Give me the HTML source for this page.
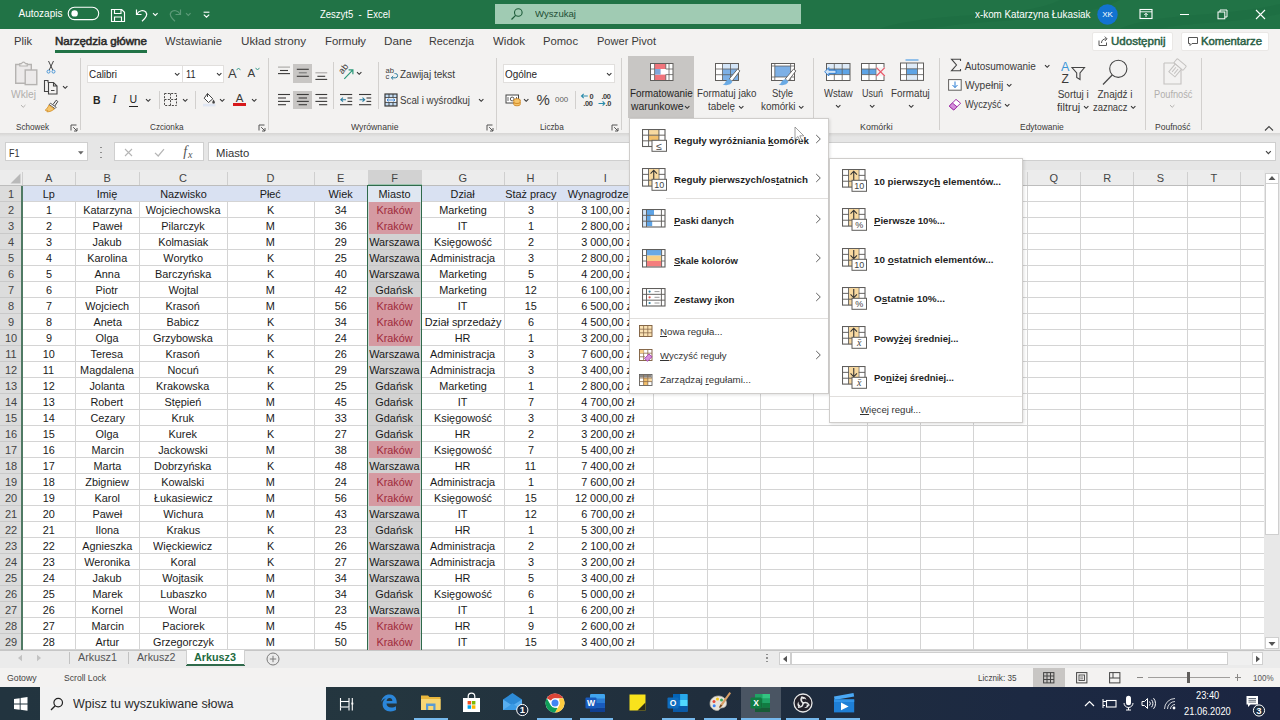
<!DOCTYPE html>
<html lang="pl"><head><meta charset="utf-8"><title>Zeszyt5 - Excel</title><style>
html,body{margin:0;padding:0}
body{width:1280px;height:720px;overflow:hidden;position:relative;background:#fff;font-family:"Liberation Sans",sans-serif;font-size:10px;color:#333}
.b{position:absolute;display:block}
.t{position:absolute;white-space:nowrap;display:block}
u{text-decoration:underline;text-underline-offset:1px}
</style></head><body>
<!-- p_title -->
<div class="b" style="left:0px;top:0px;width:1280px;height:28.5px;background:#217346"></div>
<span class="t" style="left:18.5px;top:7.3px;font-size:10px;line-height:13px;color:#fff">Autozapis</span>
<svg class="b" style="left:67px;top:6px" width="34" height="15" viewBox="0 0 34 15"><rect x="1.2" y="1.2" width="30.5" height="12.4" rx="6.2" fill="none" stroke="#fff" stroke-width="1.1"/><circle cx="7.6" cy="7.4" r="3.2" fill="#fff"/></svg>
<svg class="b" style="left:110px;top:8px" width="16" height="15" viewBox="0 0 16 15"><path d="M1.5 1.5 h10.2 l2.8 2.8 v9.2 h-13z M4.5 1.5 v4 h6.5 v-4 M4.5 13.5 v-4.5 h7 v4.5" fill="none" stroke="#fff" stroke-width="1.15"/></svg>
<svg class="b" style="left:134px;top:7px" width="16" height="16" viewBox="0 0 16 16"><path d="M2.5 2.5 v5 h5" fill="none" stroke="#fff" stroke-width="1.2"/><path d="M2.8 7.2 C5 3.5 9.5 2.5 11.8 5 C14 7.5 12 11 8 14.2" fill="none" stroke="#fff" stroke-width="1.2"/></svg>
<svg class="b" style="left:152.2px;top:11.7px" width="6.6" height="5.6" viewBox="0 0 6.6 5.6"><path d="M1 1.15 l2.3 2.3 l2.3 -2.3" fill="none" stroke="#fff" stroke-width="1.1"/></svg>
<svg class="b" style="left:167px;top:7px" width="16" height="16" viewBox="0 0 16 16"><path d="M13.5 2.5 v5 h-5" fill="none" stroke="#5c9a78" stroke-width="1.2"/><path d="M13.2 7.2 C11 3.5 6.5 2.5 4.2 5 C2 7.5 4 11 8 14.2" fill="none" stroke="#5c9a78" stroke-width="1.2"/></svg>
<svg class="b" style="left:184.7px;top:11.7px" width="6.6" height="5.6" viewBox="0 0 6.6 5.6"><path d="M1 1.15 l2.3 2.3 l2.3 -2.3" fill="none" stroke="#5c9a78" stroke-width="1.1"/></svg>
<svg class="b" style="left:202px;top:10px" width="9" height="9" viewBox="0 0 9 9"><path d="M1.6 2.2 h5.8" stroke="#fff" stroke-width="1.1"/><path d="M1.8 4.6 l2.7 2.6 l2.7 -2.6" fill="none" stroke="#fff" stroke-width="1.1"/></svg>
<span class="t" style="left:320px;top:6.6px;font-size:10.5px;line-height:14px;transform:scaleX(0.902);transform-origin:0 50%;color:#fff">Zeszyt5  -  Excel</span>
<div class="b" style="left:495px;top:4px;width:305.5px;height:20px;background:#a0cbb3"></div>
<svg class="b" style="left:510px;top:7px" width="14" height="14" viewBox="0 0 14 14"><circle cx="8.3" cy="5.5" r="3.8" fill="none" stroke="#1e5c3a" stroke-width="1.1"/><path d="M5.6 8.3 L1.5 12.5" stroke="#1e5c3a" stroke-width="1.2"/></svg>
<span class="t" style="left:535px;top:8px;font-size:9.5px;line-height:12px;transform:scaleX(1.011);transform-origin:0 50%;color:#1f4f35">Wyszukaj</span>
<svg class="b" style="left:820px;top:0px" width="460" height="28.5" viewBox="0 0 460 28.5"><path d="M60 28.5 C120 10 200 20 240 0 L300 0 C260 22 170 18 110 28.5z" fill="#1e6b41" opacity=".55"/><path d="M300 28.5 C340 12 400 18 460 4 L460 14 C410 24 370 22 340 28.5z" fill="#1e6b41" opacity=".55"/></svg>
<span class="t" style="left:975px;top:7.5px;font-size:10px;line-height:13px;transform:scaleX(0.985);transform-origin:0 50%;color:#fff">x-kom Katarzyna Łukasiak</span>
<svg class="b" style="left:1097px;top:3.5px" width="21" height="21" viewBox="0 0 21 21"><circle cx="10.5" cy="10.5" r="10.2" fill="#1273d1"/></svg>
<span class="t" style="left:1102.16px;top:9.6px;font-size:8px;line-height:10px;color:#fff">XK</span>
<svg class="b" style="left:1139px;top:8px" width="14" height="12" viewBox="0 0 14 12"><rect x="1" y="1.5" width="12" height="9" fill="none" stroke="#fff" stroke-width="1.1"/><path d="M1 3.8 h12" stroke="#fff" stroke-width=".9"/><path d="M7 9 v-3.6 M5.3 7 l1.7 -1.7 l1.7 1.7" fill="none" stroke="#fff" stroke-width="1"/></svg>
<div class="b" style="left:1180px;top:14px;width:9px;height:1.1px;background:#fff"></div>
<svg class="b" style="left:1217px;top:9px" width="11" height="11" viewBox="0 0 11 11"><rect x="1" y="3" width="6.8" height="6.8" fill="none" stroke="#fff" stroke-width="1"/><path d="M3 3 v-2 h7 v7 h-2" fill="none" stroke="#fff" stroke-width="1"/></svg>
<svg class="b" style="left:1255px;top:9px" width="11" height="11" viewBox="0 0 11 11"><path d="M1 1 L10 10 M10 1 L1 10" stroke="#fff" stroke-width="1.1"/></svg>
<!-- p_tabs -->
<div class="b" style="left:0px;top:28.5px;width:1280px;height:104.7px;background:#f3f2f1"></div>
<span class="t" style="left:14px;top:34.3px;font-size:10.5px;line-height:14px;transform:scaleX(1.064);transform-origin:0 50%;color:#3b3a39">Plik</span>
<span class="t" style="left:165px;top:34.3px;font-size:10.5px;line-height:14px;transform:scaleX(1.062);transform-origin:0 50%;color:#3b3a39">Wstawianie</span>
<span class="t" style="left:241px;top:34.3px;font-size:10.5px;line-height:14px;transform:scaleX(1.114);transform-origin:0 50%;color:#3b3a39">Układ strony</span>
<span class="t" style="left:325px;top:34.3px;font-size:10.5px;line-height:14px;transform:scaleX(1.081);transform-origin:0 50%;color:#3b3a39">Formuły</span>
<span class="t" style="left:384px;top:34.3px;font-size:10.5px;line-height:14px;transform:scaleX(1.115);transform-origin:0 50%;color:#3b3a39">Dane</span>
<span class="t" style="left:429px;top:34.3px;font-size:10.5px;line-height:14px;transform:scaleX(1.028);transform-origin:0 50%;color:#3b3a39">Recenzja</span>
<span class="t" style="left:493px;top:34.3px;font-size:10.5px;line-height:14px;transform:scaleX(1.097);transform-origin:0 50%;color:#3b3a39">Widok</span>
<span class="t" style="left:543px;top:34.3px;font-size:10.5px;line-height:14px;transform:scaleX(1.071);transform-origin:0 50%;color:#3b3a39">Pomoc</span>
<span class="t" style="left:597px;top:34.3px;font-size:10.5px;line-height:14px;transform:scaleX(1.053);transform-origin:0 50%;color:#3b3a39">Power Pivot</span>
<span class="t" style="left:55px;top:34.3px;font-size:10.5px;line-height:14px;transform:scaleX(1.102);transform-origin:0 50%;color:#2b2a29;-webkit-text-stroke:.5px #2b2a29">Narzędzia główne</span>
<div class="b" style="left:55px;top:50px;width:92px;height:2.6px;background:#217346"></div>
<div class="b" style="left:1091.5px;top:32px;width:81.5px;height:18.5px;background:#fff;border:1px solid #eae8e6;box-sizing:border-box;border-radius:2px"></div>
<svg class="b" style="left:1097px;top:35px" width="12" height="12" viewBox="0 0 12 12"><path d="M2 5.5 v5 h7.5 v-3" fill="none" stroke="#555" stroke-width="1"/><path d="M4.5 8 C4.5 5 6.5 3.8 9.5 3.8 M7.8 1.6 l2.2 2.2 l-2.2 2.2" fill="none" stroke="#555" stroke-width="1"/></svg>
<span class="t" style="left:1111.3px;top:34.3px;font-size:10.5px;line-height:14px;transform:scaleX(1.098);transform-origin:0 50%;color:#2a5f45;-webkit-text-stroke:.45px #2a5f45">Udostępnij</span>
<div class="b" style="left:1181px;top:32px;width:88px;height:18.5px;background:#fff;border:1px solid #eae8e6;box-sizing:border-box;border-radius:2px"></div>
<svg class="b" style="left:1186.5px;top:36px" width="12" height="11" viewBox="0 0 12 11"><path d="M1.5 1.5 h9 v6 h-5.5 l-2 2 v-2 h-1.5z" fill="none" stroke="#555" stroke-width="1"/></svg>
<span class="t" style="left:1200.8px;top:34.3px;font-size:10.5px;line-height:14px;transform:scaleX(1.078);transform-origin:0 50%;color:#2a5f45;-webkit-text-stroke:.45px #2a5f45">Komentarze</span>
<!-- p_ribbon1 -->
<svg class="b" style="left:14px;top:58.5px" width="25" height="28" viewBox="0 0 25 28"><path d="M1.7 5.5 H17.3 V24.3 H1.7z" fill="#eceaea" stroke="#b5b3b1" stroke-width="1.4"/><path d="M5.8 7 V4.6 H7.6 a2 2 0 0 1 3.8 0 H13.2 V7z" fill="#f3f2f1" stroke="#b5b3b1" stroke-width="1.2"/><rect x="11.2" y="11" width="11.6" height="14.6" fill="#eceaea" stroke="#b5b3b1" stroke-width="1.4"/></svg>
<span class="t" style="left:11px;top:87.9px;font-size:10px;line-height:13px;transform:scaleX(1.023);transform-origin:0 50%;color:#b1afad">Wklej</span>
<svg class="b" style="left:19.8px;top:103.8px" width="6.4" height="5.4" viewBox="0 0 6.4 5.4"><path d="M1 1.1 l2.2 2.2 l2.2 -2.2" fill="none" stroke="#b1afad" stroke-width="1"/></svg>
<svg class="b" style="left:45px;top:60px" width="12" height="15" viewBox="0 0 12 15"><path d="M3.5 1 L7.8 10 M8.5 1 L4.2 10" stroke="#444" stroke-width="1"/><circle cx="3.5" cy="11.6" r="1.5" fill="none" stroke="#4a96d6" stroke-width="1"/><circle cx="8.5" cy="11.6" r="1.5" fill="none" stroke="#4a96d6" stroke-width="1"/></svg>
<svg class="b" style="left:43px;top:79px" width="16" height="16" viewBox="0 0 16 16"><path d="M5 3.5 v-2 h-3.5 v11 h3.5" fill="none" stroke="#444" stroke-width="1.1"/><path d="M5.5 3.5 h5 l3.5 3.5 v8 h-8.5z M10.5 3.5 v3.5 h3.5" fill="#f3f2f1" stroke="#444" stroke-width="1.1"/><path d="M8 11.5 h3.5" stroke="#444" stroke-width="1"/></svg>
<svg class="b" style="left:62.3px;top:84.8px" width="6.4" height="5.4" viewBox="0 0 6.4 5.4"><path d="M1 1.1 l2.2 2.2 l2.2 -2.2" fill="none" stroke="#333" stroke-width="1.1"/></svg>
<svg class="b" style="left:43.5px;top:99px" width="15" height="14" viewBox="0 0 15 14"><path d="M9 5.5 L12.2 1.2 L13.8 2.5 L10.8 7" fill="none" stroke="#444" stroke-width="1"/><path d="M6.5 4.2 L12.2 8.3 L10.9 9.6 L5.2 5.5z" fill="#fff" stroke="#444" stroke-width=".9"/><path d="M5 6 L10.3 10 C8.5 11.5 6 13 2.8 12.8 L3.8 11.4 L1.2 11.2 C2.8 10 4 8.2 5 6z" fill="#f6c56b" stroke="#d08a1e" stroke-width=".8"/></svg>
<span class="t" style="left:16px;top:121px;font-size:9.5px;line-height:12px;transform:scaleX(0.856);transform-origin:0 50%;color:#3b3a39">Schowek</span>
<svg class="b" style="left:69.5px;top:123.5px" width="8" height="8" viewBox="0 0 8 8"><path d="M1 6.5 v-5.5 h5.5" fill="none" stroke="#555" stroke-width="1"/><path d="M3.2 3.2 L7 7 M7 4 v3 h-3" fill="none" stroke="#555" stroke-width="1"/></svg>
<div class="b" style="left:79.5px;top:58px;width:1px;height:72px;background:#d2d0ce"></div>
<div class="b" style="left:87px;top:64.5px;width:96px;height:18.5px;background:#fff;border:1px solid #e1dfdd;box-sizing:border-box"></div>
<div class="b" style="left:183px;top:64.5px;width:40.5px;height:18.5px;background:#fff;border:1px solid #e1dfdd;border-left:none;box-sizing:border-box"></div>
<span class="t" style="left:89px;top:67.5px;font-size:10px;line-height:13px;transform:scaleX(0.988);transform-origin:0 50%;color:#252423">Calibri</span>
<svg class="b" style="left:174.3px;top:71.8px" width="6.4" height="5.4" viewBox="0 0 6.4 5.4"><path d="M1 1.1 l2.2 2.2 l2.2 -2.2" fill="none" stroke="#333" stroke-width="1.1"/></svg>
<span class="t" style="left:185.5px;top:67.5px;font-size:10px;line-height:13px;transform:scaleX(0.915);transform-origin:0 50%;color:#252423">11</span>
<svg class="b" style="left:215.8px;top:71.8px" width="6.4" height="5.4" viewBox="0 0 6.4 5.4"><path d="M1 1.1 l2.2 2.2 l2.2 -2.2" fill="none" stroke="#333" stroke-width="1.1"/></svg>
<span class="t" style="left:228px;top:64.5px;font-size:13px;line-height:17px;color:#3b3a39">A</span>
<svg class="b" style="left:236px;top:66.5px" width="5" height="4" viewBox="0 0 5 4"><path d="M.5 3.2 L2.5 1 L4.5 3.2" fill="none" stroke="#3c9c8c" stroke-width="1"/></svg>
<span class="t" style="left:247.5px;top:66px;font-size:11.5px;line-height:15px;color:#3b3a39">A</span>
<svg class="b" style="left:254.5px;top:66.5px" width="5" height="4" viewBox="0 0 5 4"><path d="M.5 .8 L2.5 3 L4.5 .8" fill="none" stroke="#3c9c8c" stroke-width="1"/></svg>
<span class="t" style="left:93px;top:92.6px;font-size:10.5px;line-height:14px;font-weight:bold;color:#252423">B</span>
<span class="t" style="left:112.5px;top:91.4px;font-size:12px;line-height:16px;font-style:italic;font-family:'Liberation Serif',serif;color:#252423">I</span>
<span class="t" style="left:129.5px;top:92.3px;font-size:10.5px;line-height:14px;color:#252423">U</span>
<div class="b" style="left:129px;top:105.5px;width:8.5px;height:1px;background:#252423"></div>
<svg class="b" style="left:144.8px;top:97.8px" width="6.4" height="5.4" viewBox="0 0 6.4 5.4"><path d="M1 1.1 l2.2 2.2 l2.2 -2.2" fill="none" stroke="#333" stroke-width="1.1"/></svg>
<div class="b" style="left:159px;top:91px;width:1px;height:18px;background:#d2d0ce"></div>
<svg class="b" style="left:163px;top:93px" width="15" height="14" viewBox="0 0 15 14"><rect x="1.5" y=".5" width="12" height="12" fill="none" stroke="#4a4846" stroke-width="1" stroke-dasharray="2 1.33"/><path d="M7.5 .5 v12 M1.5 6.5 h12" stroke="#4a4846" stroke-width="1" stroke-dasharray="2 1.33"/></svg>
<svg class="b" style="left:182.3px;top:97.8px" width="6.4" height="5.4" viewBox="0 0 6.4 5.4"><path d="M1 1.1 l2.2 2.2 l2.2 -2.2" fill="none" stroke="#333" stroke-width="1.1"/></svg>
<div class="b" style="left:195px;top:91px;width:1px;height:18px;background:#d2d0ce"></div>
<svg class="b" style="left:201.5px;top:92px" width="14" height="15" viewBox="0 0 14 15"><path d="M5.5 1.5 L10.8 6.8 L6.5 10.5 L2.2 6.2z" fill="#fff" stroke="#444" stroke-width="1"/><path d="M5.5 1.5 v3.5" stroke="#444" stroke-width="1"/><path d="M11.5 7.5 c.9 1.4 1.4 2.2 1.4 2.9 a1.3 1.3 0 0 1 -2.6 0 c0 -.7 .5 -1.5 1.2 -2.9z" fill="#444"/><rect x="1" y="11.8" width="12.5" height="2.6" fill="#dfe6f3"/></svg>
<svg class="b" style="left:219.3px;top:97.8px" width="6.4" height="5.4" viewBox="0 0 6.4 5.4"><path d="M1 1.1 l2.2 2.2 l2.2 -2.2" fill="none" stroke="#333" stroke-width="1.1"/></svg>
<span class="t" style="left:235.66px;top:90.5px;font-size:11.5px;line-height:15px;color:#3b3a39">A</span>
<div class="b" style="left:233px;top:102.7px;width:13.2px;height:3.3px;background:#d7191c"></div>
<svg class="b" style="left:251px;top:97.8px" width="6.4" height="5.4" viewBox="0 0 6.4 5.4"><path d="M1 1.1 l2.2 2.2 l2.2 -2.2" fill="none" stroke="#333" stroke-width="1.1"/></svg>
<span class="t" style="left:149.5px;top:121px;font-size:9.5px;line-height:12px;transform:scaleX(0.857);transform-origin:0 50%;color:#3b3a39">Czcionka</span>
<svg class="b" style="left:258px;top:123.5px" width="8" height="8" viewBox="0 0 8 8"><path d="M1 6.5 v-5.5 h5.5" fill="none" stroke="#555" stroke-width="1"/><path d="M3.2 3.2 L7 7 M7 4 v3 h-3" fill="none" stroke="#555" stroke-width="1"/></svg>
<div class="b" style="left:267.5px;top:58px;width:1px;height:72px;background:#d2d0ce"></div>
<div class="b" style="left:293px;top:64px;width:19px;height:18.7px;background:#c8c6c4"></div>
<div class="b" style="left:293px;top:90.7px;width:19px;height:18.7px;background:#c8c6c4"></div>
<svg class="b" style="left:277px;top:65px" width="15" height="12" viewBox="0 0 15 12"><path d="M1 2.1 H13" stroke="#a8a6a4" stroke-width="1.1"/><path d="M3 5.5 H11" stroke="#3b3a39" stroke-width="1.1"/><path d="M1 8.6 H13" stroke="#3b3a39" stroke-width="1.1"/></svg>
<svg class="b" style="left:296px;top:67px" width="15" height="12" viewBox="0 0 15 12"><path d="M0.8 2.3 H12.8" stroke="#3b3a39" stroke-width="1.1"/><path d="M2.8 5.8 H10.8" stroke="#777" stroke-width="1.1"/><path d="M0.8 9.3 H12.8" stroke="#3b3a39" stroke-width="1.1"/></svg>
<svg class="b" style="left:314px;top:70px" width="15" height="12" viewBox="0 0 15 12"><path d="M1.4 2.8 H13.2" stroke="#a8a6a4" stroke-width="1.1"/><path d="M3.4 6.3 H11.2" stroke="#3b3a39" stroke-width="1.1"/><path d="M1.4 9.4 H13.2" stroke="#3b3a39" stroke-width="1.1"/></svg>
<svg class="b" style="left:277px;top:92px" width="15" height="15" viewBox="0 0 15 15"><path d="M1 2.5 H13" stroke="#3b3a39" stroke-width="1.1"/><path d="M1 6 H9" stroke="#3b3a39" stroke-width="1.1"/><path d="M1 9.4 H13" stroke="#3b3a39" stroke-width="1.1"/><path d="M1 12.7 H9" stroke="#3b3a39" stroke-width="1.1"/></svg>
<svg class="b" style="left:296px;top:92px" width="15" height="15" viewBox="0 0 15 15"><path d="M0.8 2.5 H12.8" stroke="#3b3a39" stroke-width="1.1"/><path d="M2.6 6 H11" stroke="#3b3a39" stroke-width="1.1"/><path d="M0.8 9.4 H12.8" stroke="#3b3a39" stroke-width="1.1"/><path d="M2.6 12.7 H11" stroke="#3b3a39" stroke-width="1.1"/></svg>
<svg class="b" style="left:314px;top:92px" width="15" height="15" viewBox="0 0 15 15"><path d="M1.4 2.5 H13.2" stroke="#3b3a39" stroke-width="1.1"/><path d="M5 6 H13.2" stroke="#3b3a39" stroke-width="1.1"/><path d="M1.4 9.4 H13.2" stroke="#3b3a39" stroke-width="1.1"/><path d="M5 12.7 H13.2" stroke="#3b3a39" stroke-width="1.1"/></svg>
<div class="b" style="left:333px;top:62px;width:1px;height:47px;background:#d2d0ce"></div>
<svg class="b" style="left:338px;top:63px" width="17" height="18" viewBox="0 0 17 18"><text x="0" y="0" font-size="9" font-family="Liberation Sans, sans-serif" fill="#3b3a39" transform="translate(4.6 11.5) rotate(-52)">ab</text><path d="M6.3 15.8 L14.6 7.2 M10.6 6.9 h4.3 v4.3" fill="none" stroke="#2e9a7b" stroke-width="1.2"/></svg>
<svg class="b" style="left:355.6px;top:71.3px" width="6.4" height="5.4" viewBox="0 0 6.4 5.4"><path d="M1 1.1 l2.2 2.2 l2.2 -2.2" fill="none" stroke="#333" stroke-width="1.1"/></svg>
<svg class="b" style="left:339.8px;top:92px" width="13" height="15" viewBox="0 0 13 15"><path d="M0 2.5 H12.2" stroke="#3b3a39" stroke-width="1.1"/><path d="M7.5 6 H12.2" stroke="#3b3a39" stroke-width="1.1"/><path d="M7.5 9.4 H12.2" stroke="#3b3a39" stroke-width="1.1"/><path d="M0 12.7 H12.2" stroke="#3b3a39" stroke-width="1.1"/><path d="M6 7.7 h-5.2 M3 5.7 l-2.2 2 l2.2 2" fill="none" stroke="#2b7c9f" stroke-width="1.1"/></svg>
<svg class="b" style="left:358.7px;top:92px" width="13" height="15" viewBox="0 0 13 15"><path d="M0 2.5 H12.2" stroke="#3b3a39" stroke-width="1.1"/><path d="M7.5 6 H12.2" stroke="#3b3a39" stroke-width="1.1"/><path d="M7.5 9.4 H12.2" stroke="#3b3a39" stroke-width="1.1"/><path d="M0 12.7 H12.2" stroke="#3b3a39" stroke-width="1.1"/><path d="M0.5 7.7 h5.2 M3.5 5.7 l2.2 2 l-2.2 2" fill="none" stroke="#2b7c9f" stroke-width="1.1"/></svg>
<div class="b" style="left:378px;top:62px;width:1px;height:47px;background:#d2d0ce"></div>
<svg class="b" style="left:385px;top:65px" width="14" height="15" viewBox="0 0 14 15"><text x=".6" y="7.6" font-size="7.6" font-family="Liberation Sans, sans-serif" fill="#3b3a39">ab</text><text x=".6" y="13.6" font-size="7.6" font-family="Liberation Sans, sans-serif" fill="#3b3a39">c</text><path d="M9.5 8.6 h1 a2.1 2.1 0 0 1 0 4.2 h-4 M8.2 11 l-1.9 1.8 l1.9 1.8" fill="none" stroke="#2b7c9f" stroke-width="1"/></svg>
<span class="t" style="left:400px;top:68.2px;font-size:10px;line-height:13px;color:#3b3a39">Zawijaj tekst</span>
<svg class="b" style="left:383.5px;top:92.5px" width="14" height="14" viewBox="0 0 14 14"><rect x="1" y="1" width="12" height="12" fill="#c3dcf3"/><rect x="1" y="4.6" width="12" height="4.8" fill="#fff"/><path d="M5 1 v3.6 M9 1 v3.6 M5 9.4 v3.6 M9 9.4 v3.6 M1 4.6 h12 M1 9.4 h12" stroke="#3b3a39" stroke-width=".9"/><rect x="1" y="1" width="12" height="12" fill="none" stroke="#3b3a39" stroke-width="1.2"/><path d="M3 7 h8 M4.6 5.6 l-1.6 1.4 l1.6 1.4 M9.4 5.6 l1.6 1.4 l-1.6 1.4" fill="none" stroke="#2b7cd3" stroke-width=".9"/></svg>
<span class="t" style="left:400px;top:94.1px;font-size:10px;line-height:13px;transform:scaleX(0.976);transform-origin:0 50%;color:#3b3a39">Scal i wyśrodkuj</span>
<svg class="b" style="left:477.8px;top:98.3px" width="6.4" height="5.4" viewBox="0 0 6.4 5.4"><path d="M1 1.1 l2.2 2.2 l2.2 -2.2" fill="none" stroke="#333" stroke-width="1.1"/></svg>
<span class="t" style="left:350.5px;top:121px;font-size:9.5px;line-height:12px;transform:scaleX(0.910);transform-origin:0 50%;color:#3b3a39">Wyrównanie</span>
<svg class="b" style="left:485.5px;top:123.5px" width="8" height="8" viewBox="0 0 8 8"><path d="M1 6.5 v-5.5 h5.5" fill="none" stroke="#555" stroke-width="1"/><path d="M3.2 3.2 L7 7 M7 4 v3 h-3" fill="none" stroke="#555" stroke-width="1"/></svg>
<div class="b" style="left:495.5px;top:58px;width:1px;height:72px;background:#d2d0ce"></div>
<div class="b" style="left:503px;top:64px;width:112px;height:19px;background:#fff;border:1px solid #e1dfdd;box-sizing:border-box"></div>
<span class="t" style="left:505.3px;top:67.5px;font-size:10px;line-height:13px;transform:scaleX(0.992);transform-origin:0 50%;color:#252423">Ogólne</span>
<svg class="b" style="left:606.3px;top:71.8px" width="6.4" height="5.4" viewBox="0 0 6.4 5.4"><path d="M1 1.1 l2.2 2.2 l2.2 -2.2" fill="none" stroke="#333" stroke-width="1.1"/></svg>
<svg class="b" style="left:504.5px;top:93px" width="17" height="14" viewBox="0 0 17 14"><rect x="1" y="2" width="12.5" height="8" fill="#fff" stroke="#444" stroke-width="1"/><circle cx="7.2" cy="6" r="1.9" fill="none" stroke="#444" stroke-width=".9"/><path d="M3 4 v4 M11.5 4 v4" stroke="#444" stroke-width=".8"/><ellipse cx="12" cy="7" rx="3.2" ry="1.3" fill="#f6c56b" stroke="#c97d16" stroke-width=".8"/><path d="M8.8 7 v4.5 a3.2 1.3 0 0 0 6.4 0 v-4.5" fill="#f6c56b" stroke="#c97d16" stroke-width=".8"/><path d="M8.8 9.2 a3.2 1.3 0 0 0 6.4 0" fill="none" stroke="#c97d16" stroke-width=".8"/></svg>
<svg class="b" style="left:523.4px;top:97.8px" width="6.4" height="5.4" viewBox="0 0 6.4 5.4"><path d="M1 1.1 l2.2 2.2 l2.2 -2.2" fill="none" stroke="#333" stroke-width="1.1"/></svg>
<span class="t" style="left:536.5px;top:89.5px;font-size:15px;line-height:20px;color:#3b3a39">%</span>
<span class="t" style="left:555px;top:95px;font-size:8px;line-height:10px;transform:scaleX(0.989);transform-origin:0 50%;color:#605e5c">000</span>
<div class="b" style="left:574.7px;top:91px;width:1px;height:18px;background:#d2d0ce"></div>
<svg class="b" style="left:579.5px;top:92px" width="15" height="16" viewBox="0 0 15 16"><text x="9.6" y="6.6" font-size="7.4" font-weight="bold" font-family="Liberation Sans, sans-serif" fill="#3b3a39" letter-spacing="-.35">0</text><text x="3.2" y="14.2" font-size="7.4" font-weight="bold" font-family="Liberation Sans, sans-serif" fill="#3b3a39" letter-spacing="-.35">.00</text><path d="M7.8 4 h-6.3 M3.7 1.8 l-2.2 2.2 l2.2 2.2" fill="none" stroke="#2b8cab" stroke-width="1.1"/></svg>
<svg class="b" style="left:598px;top:92px" width="15" height="16" viewBox="0 0 15 16"><text x="3.4" y="6.6" font-size="7.4" font-weight="bold" font-family="Liberation Sans, sans-serif" fill="#3b3a39" letter-spacing="-.35">.00</text><text x="7.6" y="14.2" font-size="7.4" font-weight="bold" font-family="Liberation Sans, sans-serif" fill="#3b3a39" letter-spacing="-.35">.0</text><path d="M.5 11.5 h6.3 M4.6 9.3 l2.2 2.2 l-2.2 2.2" fill="none" stroke="#2b8cab" stroke-width="1.1"/></svg>
<span class="t" style="left:539.7px;top:121px;font-size:9.5px;line-height:12px;transform:scaleX(0.863);transform-origin:0 50%;color:#3b3a39">Liczba</span>
<svg class="b" style="left:611px;top:123.5px" width="8" height="8" viewBox="0 0 8 8"><path d="M1 6.5 v-5.5 h5.5" fill="none" stroke="#555" stroke-width="1"/><path d="M3.2 3.2 L7 7 M7 4 v3 h-3" fill="none" stroke="#555" stroke-width="1"/></svg>
<div class="b" style="left:620.7px;top:58px;width:1px;height:72px;background:#d2d0ce"></div>
<!-- p_ribbon2 -->
<div class="b" style="left:628px;top:55.8px;width:66.4px;height:62px;background:#c8c6c4"></div>
<svg class="b" style="left:649.6px;top:63.2px" width="24" height="18" viewBox="0 0 24 18"><rect x=".5" y=".5" width="22.5" height="17" fill="#fff"/><rect x="4.6" y="1" width="11.2" height="5" fill="#f0747c"/><rect x="4.6" y="11.6" width="11.2" height="5.6" fill="#f0747c"/><rect x="4.6" y="6" width="6" height="5.6" fill="#7fa7dc"/><rect x=".5" y=".5" width="22.5" height="17" fill="none" stroke="#605e5c" stroke-width="1"/><path d="M4.6 .5 V17.5 M19 .5 V17.5 M15.8 .5 V6 M15.8 11.6 V17.5 M.5 6 H4.6 M.5 11.6 H4.6 M15.8 6 H23 M15.8 11.6 H23" stroke="#605e5c" stroke-width=".8" fill="none"/></svg>
<span class="t" style="left:629.5px;top:87.3px;font-size:10px;line-height:13px;transform:scaleX(0.990);transform-origin:0 50%;color:#252423">Formatowanie</span>
<span class="t" style="left:631px;top:100.1px;font-size:10px;line-height:13px;transform:scaleX(1.038);transform-origin:0 50%;color:#252423">warunkowe</span>
<svg class="b" style="left:684.3px;top:104.8px" width="6.4" height="5.4" viewBox="0 0 6.4 5.4"><path d="M1 1.1 l2.2 2.2 l2.2 -2.2" fill="none" stroke="#333" stroke-width="1.1"/></svg>
<svg class="b" style="left:715px;top:63.2px" width="27" height="23" viewBox="0 0 27 23"><rect x=".5" y=".5" width="23" height="17" fill="#fff"/><rect x="7.5" y="1" width="16" height="5" fill="#d3e5f8"/><rect x="7.5" y="6" width="16" height="11.5" fill="#7db0e6"/><rect x=".5" y=".5" width="23" height="17" fill="none" stroke="#605e5c" stroke-width="1"/><path d="M7.5 .5 V17.5 M15.5 .5 V17.5 M.5 6 H23.5 M.5 11.7 H23.5" stroke="#605e5c" stroke-width=".8"/><path d="M14.2 16 l8.4 -10 l2.3 1.9 l-7.9 10.4z" fill="#fff" stroke="#605e5c" stroke-width=".9"/><path d="M14.4 16.2 c-1.8 .1 -3.6 1.2 -4.2 3.4 c-.3 1.1 -1.4 1.7 -2.6 1.9 c3.8 1.5 9.2 .4 9.6 -3.2z" fill="#6aaae4"/></svg>
<span class="t" style="left:696.5px;top:87.3px;font-size:10px;line-height:13px;transform:scaleX(0.982);transform-origin:0 50%;color:#3b3a39">Formatuj jako</span>
<span class="t" style="left:708.4px;top:100.1px;font-size:10px;line-height:13px;transform:scaleX(0.991);transform-origin:0 50%;color:#3b3a39">tabelę</span>
<svg class="b" style="left:738.3px;top:104.8px" width="6.4" height="5.4" viewBox="0 0 6.4 5.4"><path d="M1 1.1 l2.2 2.2 l2.2 -2.2" fill="none" stroke="#333" stroke-width="1.1"/></svg>
<svg class="b" style="left:771.2px;top:63.2px" width="27" height="23" viewBox="0 0 27 23"><rect x=".5" y=".5" width="23" height="17" fill="#fff"/><rect x="3.8" y="3" width="15.8" height="11" fill="#7db0e6"/><rect x=".5" y=".5" width="23" height="17" fill="none" stroke="#605e5c" stroke-width="1"/><path d="M3.8 .5 V17.5 M19.6 .5 V17.5 M.5 3 H23.5 M.5 14 H23.5" stroke="#605e5c" stroke-width=".8"/><path d="M14.2 16 l8.4 -10 l2.3 1.9 l-7.9 10.4z" fill="#fff" stroke="#605e5c" stroke-width=".9"/><path d="M14.4 16.2 c-1.8 .1 -3.6 1.2 -4.2 3.4 c-.3 1.1 -1.4 1.7 -2.6 1.9 c3.8 1.5 9.2 .4 9.6 -3.2z" fill="#6aaae4"/></svg>
<span class="t" style="left:772px;top:87.3px;font-size:10px;line-height:13px;transform:scaleX(0.945);transform-origin:0 50%;color:#3b3a39">Style</span>
<span class="t" style="left:760.8px;top:100.1px;font-size:10px;line-height:13px;transform:scaleX(0.986);transform-origin:0 50%;color:#3b3a39">komórki</span>
<svg class="b" style="left:798.3px;top:104.8px" width="6.4" height="5.4" viewBox="0 0 6.4 5.4"><path d="M1 1.1 l2.2 2.2 l2.2 -2.2" fill="none" stroke="#333" stroke-width="1.1"/></svg>
<div class="b" style="left:813.4px;top:58px;width:1px;height:72px;background:#d2d0ce"></div>
<svg class="b" style="left:824.2px;top:63px" width="27" height="18" viewBox="0 0 27 18"><rect x="2.5" y=".5" width="23.5" height="17" fill="#fff"/><rect x="2.5" y=".8" width="23.5" height="5.4" fill="#deebf8"/><rect x="2.5" y="6" width="23.5" height="5.6" fill="#5ea4e6"/><rect x="2.5" y=".5" width="23.5" height="17" fill="none" stroke="#605e5c" stroke-width="1"/><path d="M10.3 .5 V17.5 M18.2 .5 V17.5 M2.5 6 H26 M2.5 11.6 H26" stroke="#605e5c" stroke-width=".8"/><path d="M.7 8.8 L4.8 4.6 V7.2 H12 V10.4 H4.8 V13z" fill="#cfe3f7" stroke="#2b7cd3" stroke-width=".9"/></svg>
<span class="t" style="left:824px;top:87.3px;font-size:10px;line-height:13px;transform:scaleX(0.957);transform-origin:0 50%;color:#3b3a39">Wstaw</span>
<svg class="b" style="left:834.8px;top:104.3px" width="6.4" height="5.4" viewBox="0 0 6.4 5.4"><path d="M1 1.1 l2.2 2.2 l2.2 -2.2" fill="none" stroke="#333" stroke-width="1.1"/></svg>
<svg class="b" style="left:861px;top:63px" width="26" height="18" viewBox="0 0 26 18"><rect x=".5" y=".5" width="22.5" height="17" fill="#fff"/><rect x=".8" y="6" width="14.2" height="5.6" fill="#5ea4e6"/><rect x=".5" y=".5" width="22.5" height="17" fill="none" stroke="#605e5c" stroke-width="1"/><path d="M8 .5 V17.5 M15.2 .5 V17.5 M.5 6 H23 M.5 11.6 H23" stroke="#605e5c" stroke-width=".8"/><rect x="15.6" y="4.4" width="9" height="8.8" fill="#f3f2f1"/><path d="M15.4 4.6 L23.8 13 M23.8 4.6 L15.4 13" stroke="#e8586a" stroke-width="1.2"/></svg>
<span class="t" style="left:862px;top:87.3px;font-size:10px;line-height:13px;transform:scaleX(0.900);transform-origin:0 50%;color:#3b3a39">Usuń</span>
<svg class="b" style="left:869.3px;top:104.3px" width="6.4" height="5.4" viewBox="0 0 6.4 5.4"><path d="M1 1.1 l2.2 2.2 l2.2 -2.2" fill="none" stroke="#333" stroke-width="1.1"/></svg>
<svg class="b" style="left:899.6px;top:59.2px" width="24" height="22" viewBox="0 0 24 22"><path d="M5.5 1 H18.5" stroke="#5ea4e6" stroke-width="1.3"/><rect x=".5" y="4" width="23" height="17.4" fill="#fff"/><rect x="6.5" y="4.3" width="11" height="17" fill="#deebf8"/><rect x="6.5" y="9.8" width="11" height="5.8" fill="#5ea4e6"/><rect x=".5" y="4" width="23" height="17.4" fill="none" stroke="#605e5c" stroke-width="1"/><path d="M6.5 4 V21.4 M17.5 4 V21.4 M.5 9.8 H23.5 M.5 15.6 H23.5" stroke="#605e5c" stroke-width=".8"/></svg>
<span class="t" style="left:891.4px;top:87.3px;font-size:10px;line-height:13px;transform:scaleX(0.983);transform-origin:0 50%;color:#3b3a39">Formatuj</span>
<svg class="b" style="left:907.8px;top:104.3px" width="6.4" height="5.4" viewBox="0 0 6.4 5.4"><path d="M1 1.1 l2.2 2.2 l2.2 -2.2" fill="none" stroke="#333" stroke-width="1.1"/></svg>
<span class="t" style="left:859.6px;top:121px;font-size:9.5px;line-height:12px;transform:scaleX(0.936);transform-origin:0 50%;color:#3b3a39">Komórki</span>
<div class="b" style="left:938.7px;top:58px;width:1px;height:72px;background:#d2d0ce"></div>
<svg class="b" style="left:949.5px;top:58.4px" width="12" height="14" viewBox="0 0 12 14"><path d="M10.5 3 V1.2 H1.5 L6.5 7 L1.5 12.8 H10.5 V11" fill="none" stroke="#444" stroke-width="1.1"/></svg>
<span class="t" style="left:964.7px;top:59.9px;font-size:10px;line-height:13px;color:#3b3a39">Autosumowanie</span>
<svg class="b" style="left:1044.4px;top:63.8px" width="6.4" height="5.4" viewBox="0 0 6.4 5.4"><path d="M1 1.1 l2.2 2.2 l2.2 -2.2" fill="none" stroke="#333" stroke-width="1.1"/></svg>
<svg class="b" style="left:948px;top:78.5px" width="14" height="12" viewBox="0 0 14 12"><rect x=".6" y=".6" width="12.6" height="10.6" fill="#fff" stroke="#605e5c" stroke-width="1"/><path d="M7 2.5 V8.5 M4.5 6 L7 8.6 L9.5 6" fill="none" stroke="#2b7cd3" stroke-width="1"/></svg>
<span class="t" style="left:964.7px;top:78.7px;font-size:10px;line-height:13px;transform:scaleX(1.016);transform-origin:0 50%;color:#3b3a39">Wypełnij</span>
<svg class="b" style="left:1005.8px;top:82.8px" width="6.4" height="5.4" viewBox="0 0 6.4 5.4"><path d="M1 1.1 l2.2 2.2 l2.2 -2.2" fill="none" stroke="#333" stroke-width="1.1"/></svg>
<svg class="b" style="left:948px;top:98px" width="14" height="13" viewBox="0 0 14 13"><path d="M1.2 8.2 L8 1.4 L12.6 5.2 L5.8 12z" fill="#fff" stroke="#a030a8" stroke-width="1"/><path d="M1.2 8.2 L4.4 5 L9 8.8 L5.8 12z" fill="#d48fdb" stroke="#a030a8" stroke-width="1"/></svg>
<span class="t" style="left:964.7px;top:98.4px;font-size:10px;line-height:13px;transform:scaleX(0.922);transform-origin:0 50%;color:#3b3a39">Wyczyść</span>
<svg class="b" style="left:1004.1px;top:102.8px" width="6.4" height="5.4" viewBox="0 0 6.4 5.4"><path d="M1 1.1 l2.2 2.2 l2.2 -2.2" fill="none" stroke="#333" stroke-width="1.1"/></svg>
<svg class="b" style="left:1061px;top:60.5px" width="25" height="24" viewBox="0 0 25 24"><text x="0" y="10.3" font-size="12.6" font-family="Liberation Sans, sans-serif" fill="#3a96d8">A</text><text x=".4" y="22" font-size="12" font-family="Liberation Sans, sans-serif" fill="#3b3a39">Z</text><path d="M11 6.5 H23.5 L19 12 V18.5 L15.7 16.5 V12z" fill="none" stroke="#444" stroke-width="1.1"/></svg>
<span class="t" style="left:1057.7px;top:88.1px;font-size:10px;line-height:13px;color:#3b3a39">Sortuj i</span>
<span class="t" style="left:1056.9px;top:100.7px;font-size:10px;line-height:13px;transform:scaleX(1.104);transform-origin:0 50%;color:#3b3a39">filtruj</span>
<svg class="b" style="left:1082.5px;top:104.8px" width="6.4" height="5.4" viewBox="0 0 6.4 5.4"><path d="M1 1.1 l2.2 2.2 l2.2 -2.2" fill="none" stroke="#333" stroke-width="1.1"/></svg>
<svg class="b" style="left:1101.5px;top:59px" width="26" height="27" viewBox="0 0 26 27"><circle cx="16.3" cy="9.8" r="8.6" fill="none" stroke="#444" stroke-width="1.1"/><path d="M10.2 16 L1 25.5" stroke="#444" stroke-width="1.2"/></svg>
<span class="t" style="left:1097.5px;top:88.1px;font-size:10px;line-height:13px;color:#3b3a39">Znajdź i</span>
<span class="t" style="left:1092.7px;top:100.7px;font-size:10px;line-height:13px;transform:scaleX(0.940);transform-origin:0 50%;color:#3b3a39">zaznacz</span>
<svg class="b" style="left:1130px;top:104.8px" width="6.4" height="5.4" viewBox="0 0 6.4 5.4"><path d="M1 1.1 l2.2 2.2 l2.2 -2.2" fill="none" stroke="#333" stroke-width="1.1"/></svg>
<span class="t" style="left:1019.7px;top:121px;font-size:9.5px;line-height:12px;transform:scaleX(0.892);transform-origin:0 50%;color:#3b3a39">Edytowanie</span>
<div class="b" style="left:1145px;top:58px;width:1px;height:72px;background:#d2d0ce"></div>
<svg class="b" style="left:1162.5px;top:58px" width="26" height="27" viewBox="0 0 26 27"><path d="M1 5 H12 M18 11 V26 H1 V5" fill="none" stroke="#c4c2c0" stroke-width="1.1"/><g transform="rotate(40 15 9)"><rect x="9" y="3" width="12" height="5.5" rx="1" fill="none" stroke="#c4c2c0" stroke-width="1"/><rect x="11" y="8.5" width="8" height="10" fill="#f3f2f1" stroke="#c4c2c0" stroke-width="1"/><path d="M13.6 10.5 v6 M16.4 10.5 v6" stroke="#c4c2c0" stroke-width="1"/></g></svg>
<span class="t" style="left:1153.8px;top:88.1px;font-size:10px;line-height:13px;transform:scaleX(0.923);transform-origin:0 50%;color:#b1afad">Poufność</span>
<svg class="b" style="left:1169.3px;top:104.3px" width="6.4" height="5.4" viewBox="0 0 6.4 5.4"><path d="M1 1.1 l2.2 2.2 l2.2 -2.2" fill="none" stroke="#b1afad" stroke-width="1"/></svg>
<span class="t" style="left:1154.6px;top:121px;font-size:9.5px;line-height:12px;transform:scaleX(0.899);transform-origin:0 50%;color:#3b3a39">Poufność</span>
<div class="b" style="left:1201px;top:58px;width:1px;height:72px;background:#d2d0ce"></div>
<svg class="b" style="left:1264px;top:124.5px" width="10" height="7" viewBox="0 0 10 7"><path d="M1 5.5 L5 1.5 L9 5.5" fill="none" stroke="#444" stroke-width="1.1"/></svg>
<!-- p_grid -->
<div class="b" style="left:0px;top:133.2px;width:1280px;height:37px;background:#e6e6e6"></div>
<div class="b" style="left:0px;top:133.2px;width:1280px;height:4px;background:linear-gradient(#d6d5d4,#e6e6e6)"></div>
<div class="b" style="left:4.5px;top:142.3px;width:83.5px;height:19px;background:#fff;border:1px solid #cfcfcf;box-sizing:border-box"></div>
<span class="t" style="left:9.3px;top:145.5px;font-size:10.5px;line-height:14px;transform:scaleX(0.857);transform-origin:0 50%;color:#333">F1</span>
<svg class="b" style="left:77.5px;top:151px" width="6" height="4" viewBox="0 0 6 4"><path d="M0 .3 h5.6 l-2.8 3.2z" fill="#666"/></svg>
<div class="b" style="left:100.2px;top:146.5px;width:1.8px;height:1.8px;background:#8f8f8f"></div>
<div class="b" style="left:100.2px;top:151.5px;width:1.8px;height:1.8px;background:#8f8f8f"></div>
<div class="b" style="left:100.2px;top:156.5px;width:1.8px;height:1.8px;background:#8f8f8f"></div>
<div class="b" style="left:113.7px;top:142.3px;width:90.5px;height:19px;background:#fff;border:1px solid #cfcfcf;box-sizing:border-box"></div>
<svg class="b" style="left:123.5px;top:148px" width="9" height="9" viewBox="0 0 9 9"><path d="M1 1 L8 8 M8 1 L1 8" stroke="#b5b5b5" stroke-width="1.1"/></svg>
<svg class="b" style="left:153.5px;top:148px" width="11" height="9" viewBox="0 0 11 9"><path d="M1 4.8 L4.2 8 L10 1.2" fill="none" stroke="#b5b5b5" stroke-width="1.2"/></svg>
<span class="t" style="left:183.3px;top:143px;font-size:14px;line-height:18px;font-style:italic;font-family:'Liberation Serif',serif;color:#555">f</span>
<span class="t" style="left:188px;top:148.1px;font-size:10px;line-height:13px;font-style:italic;font-family:'Liberation Serif',serif;color:#555">x</span>
<div class="b" style="left:207.5px;top:142.3px;width:1068px;height:19px;background:#fff;border:1px solid #cfcfcf;box-sizing:border-box"></div>
<span class="t" style="left:216.3px;top:145.5px;font-size:10.5px;line-height:14px;transform:scaleX(1.074);transform-origin:0 50%;color:#333">Miasto</span>
<svg class="b" style="left:1265.4px;top:149.6px" width="6.8" height="5.8" viewBox="0 0 6.8 5.8"><path d="M1 1.2 l2.4 2.4 l2.4 -2.4" fill="none" stroke="#444" stroke-width="1.2"/></svg>
<div class="b" style="left:0px;top:169.5px;width:1263.7px;height:16px;background:#ececec"></div>
<div class="b" style="left:0px;top:185.5px;width:1263.7px;height:464.5px;background:#fff"></div>
<div class="b" style="left:0px;top:185.5px;width:22px;height:464px;background:#dcdcdc"></div>
<div class="b" style="left:22px;top:185.5px;width:631.7px;height:16px;background:#d9e1f2"></div>
<div class="b" style="left:367.5px;top:201.5px;width:54px;height:448px;background:#d2d2d2"></div>
<div class="b" style="left:367.5px;top:170px;width:54px;height:15.5px;background:#d2d2d2"></div>
<div class="b" style="left:22px;top:201px;width:1241.7px;height:1px;background:#d4d4d4"></div><div class="b" style="left:0px;top:201px;width:22px;height:1px;background:#c9c9c9"></div><div class="b" style="left:22px;top:217px;width:1241.7px;height:1px;background:#d4d4d4"></div><div class="b" style="left:0px;top:217px;width:22px;height:1px;background:#c9c9c9"></div><div class="b" style="left:22px;top:233px;width:1241.7px;height:1px;background:#d4d4d4"></div><div class="b" style="left:0px;top:233px;width:22px;height:1px;background:#c9c9c9"></div><div class="b" style="left:22px;top:249px;width:1241.7px;height:1px;background:#d4d4d4"></div><div class="b" style="left:0px;top:249px;width:22px;height:1px;background:#c9c9c9"></div><div class="b" style="left:22px;top:265px;width:1241.7px;height:1px;background:#d4d4d4"></div><div class="b" style="left:0px;top:265px;width:22px;height:1px;background:#c9c9c9"></div><div class="b" style="left:22px;top:281px;width:1241.7px;height:1px;background:#d4d4d4"></div><div class="b" style="left:0px;top:281px;width:22px;height:1px;background:#c9c9c9"></div><div class="b" style="left:22px;top:297px;width:1241.7px;height:1px;background:#d4d4d4"></div><div class="b" style="left:0px;top:297px;width:22px;height:1px;background:#c9c9c9"></div><div class="b" style="left:22px;top:313px;width:1241.7px;height:1px;background:#d4d4d4"></div><div class="b" style="left:0px;top:313px;width:22px;height:1px;background:#c9c9c9"></div><div class="b" style="left:22px;top:329px;width:1241.7px;height:1px;background:#d4d4d4"></div><div class="b" style="left:0px;top:329px;width:22px;height:1px;background:#c9c9c9"></div><div class="b" style="left:22px;top:345px;width:1241.7px;height:1px;background:#d4d4d4"></div><div class="b" style="left:0px;top:345px;width:22px;height:1px;background:#c9c9c9"></div><div class="b" style="left:22px;top:361px;width:1241.7px;height:1px;background:#d4d4d4"></div><div class="b" style="left:0px;top:361px;width:22px;height:1px;background:#c9c9c9"></div><div class="b" style="left:22px;top:377px;width:1241.7px;height:1px;background:#d4d4d4"></div><div class="b" style="left:0px;top:377px;width:22px;height:1px;background:#c9c9c9"></div><div class="b" style="left:22px;top:393px;width:1241.7px;height:1px;background:#d4d4d4"></div><div class="b" style="left:0px;top:393px;width:22px;height:1px;background:#c9c9c9"></div><div class="b" style="left:22px;top:409px;width:1241.7px;height:1px;background:#d4d4d4"></div><div class="b" style="left:0px;top:409px;width:22px;height:1px;background:#c9c9c9"></div><div class="b" style="left:22px;top:425px;width:1241.7px;height:1px;background:#d4d4d4"></div><div class="b" style="left:0px;top:425px;width:22px;height:1px;background:#c9c9c9"></div><div class="b" style="left:22px;top:441px;width:1241.7px;height:1px;background:#d4d4d4"></div><div class="b" style="left:0px;top:441px;width:22px;height:1px;background:#c9c9c9"></div><div class="b" style="left:22px;top:457px;width:1241.7px;height:1px;background:#d4d4d4"></div><div class="b" style="left:0px;top:457px;width:22px;height:1px;background:#c9c9c9"></div><div class="b" style="left:22px;top:473px;width:1241.7px;height:1px;background:#d4d4d4"></div><div class="b" style="left:0px;top:473px;width:22px;height:1px;background:#c9c9c9"></div><div class="b" style="left:22px;top:489px;width:1241.7px;height:1px;background:#d4d4d4"></div><div class="b" style="left:0px;top:489px;width:22px;height:1px;background:#c9c9c9"></div><div class="b" style="left:22px;top:505px;width:1241.7px;height:1px;background:#d4d4d4"></div><div class="b" style="left:0px;top:505px;width:22px;height:1px;background:#c9c9c9"></div><div class="b" style="left:22px;top:521px;width:1241.7px;height:1px;background:#d4d4d4"></div><div class="b" style="left:0px;top:521px;width:22px;height:1px;background:#c9c9c9"></div><div class="b" style="left:22px;top:537px;width:1241.7px;height:1px;background:#d4d4d4"></div><div class="b" style="left:0px;top:537px;width:22px;height:1px;background:#c9c9c9"></div><div class="b" style="left:22px;top:553px;width:1241.7px;height:1px;background:#d4d4d4"></div><div class="b" style="left:0px;top:553px;width:22px;height:1px;background:#c9c9c9"></div><div class="b" style="left:22px;top:569px;width:1241.7px;height:1px;background:#d4d4d4"></div><div class="b" style="left:0px;top:569px;width:22px;height:1px;background:#c9c9c9"></div><div class="b" style="left:22px;top:585px;width:1241.7px;height:1px;background:#d4d4d4"></div><div class="b" style="left:0px;top:585px;width:22px;height:1px;background:#c9c9c9"></div><div class="b" style="left:22px;top:601px;width:1241.7px;height:1px;background:#d4d4d4"></div><div class="b" style="left:0px;top:601px;width:22px;height:1px;background:#c9c9c9"></div><div class="b" style="left:22px;top:617px;width:1241.7px;height:1px;background:#d4d4d4"></div><div class="b" style="left:0px;top:617px;width:22px;height:1px;background:#c9c9c9"></div><div class="b" style="left:22px;top:633px;width:1241.7px;height:1px;background:#d4d4d4"></div><div class="b" style="left:0px;top:633px;width:22px;height:1px;background:#c9c9c9"></div><div class="b" style="left:22px;top:649px;width:1241.7px;height:1px;background:#d4d4d4"></div><div class="b" style="left:0px;top:649px;width:22px;height:1px;background:#c9c9c9"></div>
<div class="b" style="left:21.5px;top:185.5px;width:1px;height:464px;background:#d4d4d4"></div><div class="b" style="left:21.5px;top:171.5px;width:1px;height:14px;background:#cfcfcf"></div><div class="b" style="left:75px;top:185.5px;width:1px;height:464px;background:#d4d4d4"></div><div class="b" style="left:75px;top:171.5px;width:1px;height:14px;background:#cfcfcf"></div><div class="b" style="left:138.5px;top:185.5px;width:1px;height:464px;background:#d4d4d4"></div><div class="b" style="left:138.5px;top:171.5px;width:1px;height:14px;background:#cfcfcf"></div><div class="b" style="left:226.5px;top:185.5px;width:1px;height:464px;background:#d4d4d4"></div><div class="b" style="left:226.5px;top:171.5px;width:1px;height:14px;background:#cfcfcf"></div><div class="b" style="left:313.5px;top:185.5px;width:1px;height:464px;background:#d4d4d4"></div><div class="b" style="left:313.5px;top:171.5px;width:1px;height:14px;background:#cfcfcf"></div><div class="b" style="left:503.5px;top:185.5px;width:1px;height:464px;background:#d4d4d4"></div><div class="b" style="left:503.5px;top:171.5px;width:1px;height:14px;background:#cfcfcf"></div><div class="b" style="left:556.5px;top:185.5px;width:1px;height:464px;background:#d4d4d4"></div><div class="b" style="left:556.5px;top:171.5px;width:1px;height:14px;background:#cfcfcf"></div><div class="b" style="left:653.2px;top:185.5px;width:1px;height:464px;background:#d4d4d4"></div><div class="b" style="left:653.2px;top:171.5px;width:1px;height:14px;background:#cfcfcf"></div><div class="b" style="left:706.55px;top:185.5px;width:1px;height:464px;background:#d4d4d4"></div><div class="b" style="left:706.55px;top:171.5px;width:1px;height:14px;background:#cfcfcf"></div><div class="b" style="left:759.9px;top:185.5px;width:1px;height:464px;background:#d4d4d4"></div><div class="b" style="left:759.9px;top:171.5px;width:1px;height:14px;background:#cfcfcf"></div><div class="b" style="left:813.25px;top:185.5px;width:1px;height:464px;background:#d4d4d4"></div><div class="b" style="left:813.25px;top:171.5px;width:1px;height:14px;background:#cfcfcf"></div><div class="b" style="left:866.6px;top:185.5px;width:1px;height:464px;background:#d4d4d4"></div><div class="b" style="left:866.6px;top:171.5px;width:1px;height:14px;background:#cfcfcf"></div><div class="b" style="left:919.95px;top:185.5px;width:1px;height:464px;background:#d4d4d4"></div><div class="b" style="left:919.95px;top:171.5px;width:1px;height:14px;background:#cfcfcf"></div><div class="b" style="left:973.3px;top:185.5px;width:1px;height:464px;background:#d4d4d4"></div><div class="b" style="left:973.3px;top:171.5px;width:1px;height:14px;background:#cfcfcf"></div><div class="b" style="left:1026.65px;top:185.5px;width:1px;height:464px;background:#d4d4d4"></div><div class="b" style="left:1026.65px;top:171.5px;width:1px;height:14px;background:#cfcfcf"></div><div class="b" style="left:1080px;top:185.5px;width:1px;height:464px;background:#d4d4d4"></div><div class="b" style="left:1080px;top:171.5px;width:1px;height:14px;background:#cfcfcf"></div><div class="b" style="left:1133.35px;top:185.5px;width:1px;height:464px;background:#d4d4d4"></div><div class="b" style="left:1133.35px;top:171.5px;width:1px;height:14px;background:#cfcfcf"></div><div class="b" style="left:1186.7px;top:185.5px;width:1px;height:464px;background:#d4d4d4"></div><div class="b" style="left:1186.7px;top:171.5px;width:1px;height:14px;background:#cfcfcf"></div><div class="b" style="left:1240.05px;top:185.5px;width:1px;height:464px;background:#d4d4d4"></div><div class="b" style="left:1240.05px;top:171.5px;width:1px;height:14px;background:#cfcfcf"></div>
<div class="b" style="left:22.5px;top:186px;width:344.5px;height:15px;background:#d9e1f2"></div>
<div class="b" style="left:422px;top:186px;width:231.2px;height:15px;background:#d9e1f2"></div>
<div class="b" style="left:368.5px;top:217px;width:52px;height:1px;background:#c6c6c6"></div><div class="b" style="left:368.5px;top:233px;width:52px;height:1px;background:#c6c6c6"></div><div class="b" style="left:368.5px;top:249px;width:52px;height:1px;background:#c6c6c6"></div><div class="b" style="left:368.5px;top:265px;width:52px;height:1px;background:#c6c6c6"></div><div class="b" style="left:368.5px;top:281px;width:52px;height:1px;background:#c6c6c6"></div><div class="b" style="left:368.5px;top:297px;width:52px;height:1px;background:#c6c6c6"></div><div class="b" style="left:368.5px;top:313px;width:52px;height:1px;background:#c6c6c6"></div><div class="b" style="left:368.5px;top:329px;width:52px;height:1px;background:#c6c6c6"></div><div class="b" style="left:368.5px;top:345px;width:52px;height:1px;background:#c6c6c6"></div><div class="b" style="left:368.5px;top:361px;width:52px;height:1px;background:#c6c6c6"></div><div class="b" style="left:368.5px;top:377px;width:52px;height:1px;background:#c6c6c6"></div><div class="b" style="left:368.5px;top:393px;width:52px;height:1px;background:#c6c6c6"></div><div class="b" style="left:368.5px;top:409px;width:52px;height:1px;background:#c6c6c6"></div><div class="b" style="left:368.5px;top:425px;width:52px;height:1px;background:#c6c6c6"></div><div class="b" style="left:368.5px;top:441px;width:52px;height:1px;background:#c6c6c6"></div><div class="b" style="left:368.5px;top:457px;width:52px;height:1px;background:#c6c6c6"></div><div class="b" style="left:368.5px;top:473px;width:52px;height:1px;background:#c6c6c6"></div><div class="b" style="left:368.5px;top:489px;width:52px;height:1px;background:#c6c6c6"></div><div class="b" style="left:368.5px;top:505px;width:52px;height:1px;background:#c6c6c6"></div><div class="b" style="left:368.5px;top:521px;width:52px;height:1px;background:#c6c6c6"></div><div class="b" style="left:368.5px;top:537px;width:52px;height:1px;background:#c6c6c6"></div><div class="b" style="left:368.5px;top:553px;width:52px;height:1px;background:#c6c6c6"></div><div class="b" style="left:368.5px;top:569px;width:52px;height:1px;background:#c6c6c6"></div><div class="b" style="left:368.5px;top:585px;width:52px;height:1px;background:#c6c6c6"></div><div class="b" style="left:368.5px;top:601px;width:52px;height:1px;background:#c6c6c6"></div><div class="b" style="left:368.5px;top:617px;width:52px;height:1px;background:#c6c6c6"></div><div class="b" style="left:368.5px;top:633px;width:52px;height:1px;background:#c6c6c6"></div><div class="b" style="left:368.5px;top:649px;width:52px;height:1px;background:#c6c6c6"></div><div class="b" style="left:368.7px;top:201px;width:51.4px;height:17px;background:#d59aa2"></div><div class="b" style="left:368.7px;top:217px;width:51.4px;height:17px;background:#d59aa2"></div><div class="b" style="left:368.7px;top:297px;width:51.4px;height:17px;background:#d59aa2"></div><div class="b" style="left:368.7px;top:313px;width:51.4px;height:17px;background:#d59aa2"></div><div class="b" style="left:368.7px;top:329px;width:51.4px;height:17px;background:#d59aa2"></div><div class="b" style="left:368.7px;top:441px;width:51.4px;height:17px;background:#d59aa2"></div><div class="b" style="left:368.7px;top:473px;width:51.4px;height:17px;background:#d59aa2"></div><div class="b" style="left:368.7px;top:489px;width:51.4px;height:17px;background:#d59aa2"></div><div class="b" style="left:368.7px;top:617px;width:51.4px;height:17px;background:#d59aa2"></div><div class="b" style="left:368.7px;top:633px;width:51.4px;height:17px;background:#d59aa2"></div>
<div class="b" style="left:367.5px;top:185.5px;width:54px;height:16px;background:#dfe7f1"></div>
<div class="b" style="left:0px;top:184.7px;width:1263.7px;height:1px;background:#bdbdbd"></div>
<div class="b" style="left:367.5px;top:183.5px;width:54px;height:1.2px;background:#9cc4ae"></div>
<div class="b" style="left:366.9px;top:184.7px;width:55.4px;height:1.5px;background:#2f6a4b"></div>
<div class="b" style="left:366.9px;top:185px;width:1.5px;height:464.5px;background:#2f6a4b"></div>
<div class="b" style="left:420.8px;top:185px;width:1.5px;height:464.5px;background:#2f6a4b"></div>
<div class="b" style="left:21.3px;top:185.5px;width:1.6px;height:464px;background:#4f7a64"></div>
<svg class="b" style="left:9.5px;top:172.5px" width="11" height="11" viewBox="0 0 11 11"><path d="M10.5 .5 V10.5 H.5z" fill="#b9b9b9"/></svg>
<span class="t" style="left:45.08px;top:171px;font-size:11px;line-height:14px;color:#444">A</span>
<span class="t" style="left:103.58px;top:171px;font-size:11px;line-height:14px;color:#444">B</span>
<span class="t" style="left:179.03px;top:171px;font-size:11px;line-height:14px;color:#444">C</span>
<span class="t" style="left:266.53px;top:171px;font-size:11px;line-height:14px;color:#444">D</span>
<span class="t" style="left:337.08px;top:171px;font-size:11px;line-height:14px;color:#444">E</span>
<span class="t" style="left:391.14px;top:171px;font-size:11px;line-height:14px;color:#444">F</span>
<span class="t" style="left:458.47px;top:171px;font-size:11px;line-height:14px;color:#444">G</span>
<span class="t" style="left:526.53px;top:171px;font-size:11px;line-height:14px;color:#444">H</span>
<span class="t" style="left:603.82px;top:171px;font-size:11px;line-height:14px;color:#444">I</span>
<span class="t" style="left:677.62px;top:171px;font-size:11px;line-height:14px;color:#444">J</span>
<span class="t" style="left:730.06px;top:171px;font-size:11px;line-height:14px;color:#444">K</span>
<span class="t" style="left:784.02px;top:171px;font-size:11px;line-height:14px;color:#444">L</span>
<span class="t" style="left:835.84px;top:171px;font-size:11px;line-height:14px;color:#444">M</span>
<span class="t" style="left:889.8px;top:171px;font-size:11px;line-height:14px;color:#444">N</span>
<span class="t" style="left:942.85px;top:171px;font-size:11px;line-height:14px;color:#444">O</span>
<span class="t" style="left:996.81px;top:171px;font-size:11px;line-height:14px;color:#444">P</span>
<span class="t" style="left:1049.55px;top:171px;font-size:11px;line-height:14px;color:#444">Q</span>
<span class="t" style="left:1103.2px;top:171px;font-size:11px;line-height:14px;color:#444">R</span>
<span class="t" style="left:1156.86px;top:171px;font-size:11px;line-height:14px;color:#444">S</span>
<span class="t" style="left:1210.52px;top:171px;font-size:11px;line-height:14px;color:#444">T</span>
<span class="t" style="left:7.94px;top:187.3px;font-size:11px;line-height:14px;color:#444">1</span>
<span class="t" style="left:7.94px;top:203.3px;font-size:11px;line-height:14px;color:#444">2</span>
<span class="t" style="left:7.94px;top:219.3px;font-size:11px;line-height:14px;color:#444">3</span>
<span class="t" style="left:7.94px;top:235.3px;font-size:11px;line-height:14px;color:#444">4</span>
<span class="t" style="left:7.94px;top:251.3px;font-size:11px;line-height:14px;color:#444">5</span>
<span class="t" style="left:7.94px;top:267.3px;font-size:11px;line-height:14px;color:#444">6</span>
<span class="t" style="left:7.94px;top:283.3px;font-size:11px;line-height:14px;color:#444">7</span>
<span class="t" style="left:7.94px;top:299.3px;font-size:11px;line-height:14px;color:#444">8</span>
<span class="t" style="left:7.94px;top:315.3px;font-size:11px;line-height:14px;color:#444">9</span>
<span class="t" style="left:4.88px;top:331.3px;font-size:11px;line-height:14px;color:#444">10</span>
<span class="t" style="left:5.29px;top:347.3px;font-size:11px;line-height:14px;color:#444">11</span>
<span class="t" style="left:4.88px;top:363.3px;font-size:11px;line-height:14px;color:#444">12</span>
<span class="t" style="left:4.88px;top:379.3px;font-size:11px;line-height:14px;color:#444">13</span>
<span class="t" style="left:4.88px;top:395.3px;font-size:11px;line-height:14px;color:#444">14</span>
<span class="t" style="left:4.88px;top:411.3px;font-size:11px;line-height:14px;color:#444">15</span>
<span class="t" style="left:4.88px;top:427.3px;font-size:11px;line-height:14px;color:#444">16</span>
<span class="t" style="left:4.88px;top:443.3px;font-size:11px;line-height:14px;color:#444">17</span>
<span class="t" style="left:4.88px;top:459.3px;font-size:11px;line-height:14px;color:#444">18</span>
<span class="t" style="left:4.88px;top:475.3px;font-size:11px;line-height:14px;color:#444">19</span>
<span class="t" style="left:4.88px;top:491.3px;font-size:11px;line-height:14px;color:#444">20</span>
<span class="t" style="left:4.88px;top:507.3px;font-size:11px;line-height:14px;color:#444">21</span>
<span class="t" style="left:4.88px;top:523.3px;font-size:11px;line-height:14px;color:#444">22</span>
<span class="t" style="left:4.88px;top:539.3px;font-size:11px;line-height:14px;color:#444">23</span>
<span class="t" style="left:4.88px;top:555.3px;font-size:11px;line-height:14px;color:#444">24</span>
<span class="t" style="left:4.88px;top:571.3px;font-size:11px;line-height:14px;color:#444">25</span>
<span class="t" style="left:4.88px;top:587.3px;font-size:11px;line-height:14px;color:#444">26</span>
<span class="t" style="left:4.88px;top:603.3px;font-size:11px;line-height:14px;color:#444">27</span>
<span class="t" style="left:4.88px;top:619.3px;font-size:11px;line-height:14px;color:#444">28</span>
<span class="t" style="left:4.88px;top:635.3px;font-size:11px;line-height:14px;color:#444">29</span>
<span class="t" style="left:42.91px;top:186.6px;font-size:10.5px;line-height:14px;transform:scaleX(1.035);transform-origin:50% 50%;color:#1a1a1a">Lp</span>
<span class="t" style="left:97.33px;top:186.6px;font-size:10.5px;line-height:14px;transform:scaleX(1.035);transform-origin:50% 50%;color:#1a1a1a">Imię</span>
<span class="t" style="left:160.54px;top:186.6px;font-size:10.5px;line-height:14px;transform:scaleX(1.035);transform-origin:50% 50%;color:#1a1a1a">Nazwisko</span>
<span class="t" style="left:260.29px;top:186.6px;font-size:10.5px;line-height:14px;transform:scaleX(1.035);transform-origin:50% 50%;color:#1a1a1a">Płeć</span>
<span class="t" style="left:329.08px;top:186.6px;font-size:10.5px;line-height:14px;transform:scaleX(1.035);transform-origin:50% 50%;color:#1a1a1a">Wiek</span>
<span class="t" style="left:379.04px;top:186.6px;font-size:10.5px;line-height:14px;transform:scaleX(1.035);transform-origin:50% 50%;color:#1a1a1a">Miasto</span>
<span class="t" style="left:451.08px;top:186.6px;font-size:10.5px;line-height:14px;transform:scaleX(1.035);transform-origin:50% 50%;color:#1a1a1a">Dział</span>
<span class="t" style="left:505.7px;top:186.6px;font-size:10.5px;line-height:14px;transform:scaleX(1.035);transform-origin:50% 50%;color:#1a1a1a">Staż pracy</span>
<span class="t" style="left:568.92px;top:186.6px;font-size:10.5px;line-height:14px;transform:scaleX(1.035);transform-origin:50% 50%;color:#1a1a1a">Wynagrodzenie</span>
<span class="t" style="left:45.83px;top:202.6px;font-size:10.5px;line-height:14px;transform:scaleX(1.035);transform-origin:50% 50%;color:#1a1a1a">1</span>
<span class="t" style="left:83.61px;top:202.6px;font-size:10.5px;line-height:14px;transform:scaleX(1.035);transform-origin:50% 50%;color:#1a1a1a">Katarzyna</span>
<span class="t" style="left:146.92px;top:202.6px;font-size:10.5px;line-height:14px;transform:scaleX(1.035);transform-origin:50% 50%;color:#1a1a1a">Wojciechowska</span>
<span class="t" style="left:267px;top:202.6px;font-size:10.5px;line-height:14px;transform:scaleX(1.035);transform-origin:50% 50%;color:#1a1a1a">K</span>
<span class="t" style="left:334.91px;top:202.6px;font-size:10.5px;line-height:14px;transform:scaleX(1.035);transform-origin:50% 50%;color:#1a1a1a">34</span>
<span class="t" style="left:376.99px;top:202.6px;font-size:10.5px;line-height:14px;transform:scaleX(1.035);transform-origin:50% 50%;color:#a02a3c">Kraków</span>
<span class="t" style="left:439.7px;top:202.6px;font-size:10.5px;line-height:14px;transform:scaleX(1.035);transform-origin:50% 50%;color:#1a1a1a">Marketing</span>
<span class="t" style="left:527.58px;top:202.6px;font-size:10.5px;line-height:14px;transform:scaleX(1.035);transform-origin:50% 50%;color:#1a1a1a">3</span>
<span class="t" style="left:583.13px;top:202.6px;font-size:10.5px;line-height:14px;transform:scaleX(1.035);transform-origin:100% 50%;color:#1a1a1a">3 100,00 zł</span>
<span class="t" style="left:45.83px;top:218.6px;font-size:10.5px;line-height:14px;transform:scaleX(1.035);transform-origin:50% 50%;color:#1a1a1a">2</span>
<span class="t" style="left:92.95px;top:218.6px;font-size:10.5px;line-height:14px;transform:scaleX(1.035);transform-origin:50% 50%;color:#1a1a1a">Paweł</span>
<span class="t" style="left:162px;top:218.6px;font-size:10.5px;line-height:14px;transform:scaleX(1.035);transform-origin:50% 50%;color:#1a1a1a">Pilarczyk</span>
<span class="t" style="left:266.13px;top:218.6px;font-size:10.5px;line-height:14px;transform:scaleX(1.035);transform-origin:50% 50%;color:#1a1a1a">M</span>
<span class="t" style="left:334.91px;top:218.6px;font-size:10.5px;line-height:14px;transform:scaleX(1.035);transform-origin:50% 50%;color:#1a1a1a">36</span>
<span class="t" style="left:376.99px;top:218.6px;font-size:10.5px;line-height:14px;transform:scaleX(1.035);transform-origin:50% 50%;color:#a02a3c">Kraków</span>
<span class="t" style="left:458.08px;top:218.6px;font-size:10.5px;line-height:14px;transform:scaleX(1.035);transform-origin:50% 50%;color:#1a1a1a">IT</span>
<span class="t" style="left:527.58px;top:218.6px;font-size:10.5px;line-height:14px;transform:scaleX(1.035);transform-origin:50% 50%;color:#1a1a1a">1</span>
<span class="t" style="left:583.13px;top:218.6px;font-size:10.5px;line-height:14px;transform:scaleX(1.035);transform-origin:100% 50%;color:#1a1a1a">2 800,00 zł</span>
<span class="t" style="left:45.83px;top:234.6px;font-size:10.5px;line-height:14px;transform:scaleX(1.035);transform-origin:50% 50%;color:#1a1a1a">3</span>
<span class="t" style="left:93.24px;top:234.6px;font-size:10.5px;line-height:14px;transform:scaleX(1.035);transform-origin:50% 50%;color:#1a1a1a">Jakub</span>
<span class="t" style="left:158.78px;top:234.6px;font-size:10.5px;line-height:14px;transform:scaleX(1.035);transform-origin:50% 50%;color:#1a1a1a">Kolmasiak</span>
<span class="t" style="left:266.13px;top:234.6px;font-size:10.5px;line-height:14px;transform:scaleX(1.035);transform-origin:50% 50%;color:#1a1a1a">M</span>
<span class="t" style="left:334.91px;top:234.6px;font-size:10.5px;line-height:14px;transform:scaleX(1.035);transform-origin:50% 50%;color:#1a1a1a">29</span>
<span class="t" style="left:370.19px;top:234.6px;font-size:10.5px;line-height:14px;transform:scaleX(1.035);transform-origin:50% 50%;color:#1a1a1a">Warszawa</span>
<span class="t" style="left:434.74px;top:234.6px;font-size:10.5px;line-height:14px;transform:scaleX(1.035);transform-origin:50% 50%;color:#1a1a1a">Księgowość</span>
<span class="t" style="left:527.58px;top:234.6px;font-size:10.5px;line-height:14px;transform:scaleX(1.035);transform-origin:50% 50%;color:#1a1a1a">2</span>
<span class="t" style="left:583.13px;top:234.6px;font-size:10.5px;line-height:14px;transform:scaleX(1.035);transform-origin:100% 50%;color:#1a1a1a">3 000,00 zł</span>
<span class="t" style="left:45.83px;top:250.6px;font-size:10.5px;line-height:14px;transform:scaleX(1.035);transform-origin:50% 50%;color:#1a1a1a">4</span>
<span class="t" style="left:87.99px;top:250.6px;font-size:10.5px;line-height:14px;transform:scaleX(1.035);transform-origin:50% 50%;color:#1a1a1a">Karolina</span>
<span class="t" style="left:163.84px;top:250.6px;font-size:10.5px;line-height:14px;transform:scaleX(1.035);transform-origin:50% 50%;color:#1a1a1a">Worytko</span>
<span class="t" style="left:267px;top:250.6px;font-size:10.5px;line-height:14px;transform:scaleX(1.035);transform-origin:50% 50%;color:#1a1a1a">K</span>
<span class="t" style="left:334.91px;top:250.6px;font-size:10.5px;line-height:14px;transform:scaleX(1.035);transform-origin:50% 50%;color:#1a1a1a">25</span>
<span class="t" style="left:370.19px;top:250.6px;font-size:10.5px;line-height:14px;transform:scaleX(1.035);transform-origin:50% 50%;color:#1a1a1a">Warszawa</span>
<span class="t" style="left:431.24px;top:250.6px;font-size:10.5px;line-height:14px;transform:scaleX(1.035);transform-origin:50% 50%;color:#1a1a1a">Administracja</span>
<span class="t" style="left:527.58px;top:250.6px;font-size:10.5px;line-height:14px;transform:scaleX(1.035);transform-origin:50% 50%;color:#1a1a1a">3</span>
<span class="t" style="left:583.13px;top:250.6px;font-size:10.5px;line-height:14px;transform:scaleX(1.035);transform-origin:100% 50%;color:#1a1a1a">2 800,00 zł</span>
<span class="t" style="left:45.83px;top:266.6px;font-size:10.5px;line-height:14px;transform:scaleX(1.035);transform-origin:50% 50%;color:#1a1a1a">5</span>
<span class="t" style="left:94.99px;top:266.6px;font-size:10.5px;line-height:14px;transform:scaleX(1.035);transform-origin:50% 50%;color:#1a1a1a">Anna</span>
<span class="t" style="left:155.87px;top:266.6px;font-size:10.5px;line-height:14px;transform:scaleX(1.035);transform-origin:50% 50%;color:#1a1a1a">Barczyńska</span>
<span class="t" style="left:267px;top:266.6px;font-size:10.5px;line-height:14px;transform:scaleX(1.035);transform-origin:50% 50%;color:#1a1a1a">K</span>
<span class="t" style="left:334.91px;top:266.6px;font-size:10.5px;line-height:14px;transform:scaleX(1.035);transform-origin:50% 50%;color:#1a1a1a">40</span>
<span class="t" style="left:370.19px;top:266.6px;font-size:10.5px;line-height:14px;transform:scaleX(1.035);transform-origin:50% 50%;color:#1a1a1a">Warszawa</span>
<span class="t" style="left:439.7px;top:266.6px;font-size:10.5px;line-height:14px;transform:scaleX(1.035);transform-origin:50% 50%;color:#1a1a1a">Marketing</span>
<span class="t" style="left:527.58px;top:266.6px;font-size:10.5px;line-height:14px;transform:scaleX(1.035);transform-origin:50% 50%;color:#1a1a1a">5</span>
<span class="t" style="left:583.13px;top:266.6px;font-size:10.5px;line-height:14px;transform:scaleX(1.035);transform-origin:100% 50%;color:#1a1a1a">4 200,00 zł</span>
<span class="t" style="left:45.83px;top:282.6px;font-size:10.5px;line-height:14px;transform:scaleX(1.035);transform-origin:50% 50%;color:#1a1a1a">6</span>
<span class="t" style="left:96.46px;top:282.6px;font-size:10.5px;line-height:14px;transform:scaleX(1.035);transform-origin:50% 50%;color:#1a1a1a">Piotr</span>
<span class="t" style="left:168.51px;top:282.6px;font-size:10.5px;line-height:14px;transform:scaleX(1.035);transform-origin:50% 50%;color:#1a1a1a">Wojtal</span>
<span class="t" style="left:266.13px;top:282.6px;font-size:10.5px;line-height:14px;transform:scaleX(1.035);transform-origin:50% 50%;color:#1a1a1a">M</span>
<span class="t" style="left:334.91px;top:282.6px;font-size:10.5px;line-height:14px;transform:scaleX(1.035);transform-origin:50% 50%;color:#1a1a1a">42</span>
<span class="t" style="left:376.41px;top:282.6px;font-size:10.5px;line-height:14px;transform:scaleX(1.035);transform-origin:50% 50%;color:#1a1a1a">Gdańsk</span>
<span class="t" style="left:439.7px;top:282.6px;font-size:10.5px;line-height:14px;transform:scaleX(1.035);transform-origin:50% 50%;color:#1a1a1a">Marketing</span>
<span class="t" style="left:524.66px;top:282.6px;font-size:10.5px;line-height:14px;transform:scaleX(1.035);transform-origin:50% 50%;color:#1a1a1a">12</span>
<span class="t" style="left:583.13px;top:282.6px;font-size:10.5px;line-height:14px;transform:scaleX(1.035);transform-origin:100% 50%;color:#1a1a1a">6 100,00 zł</span>
<span class="t" style="left:45.83px;top:298.6px;font-size:10.5px;line-height:14px;transform:scaleX(1.035);transform-origin:50% 50%;color:#1a1a1a">7</span>
<span class="t" style="left:86.05px;top:298.6px;font-size:10.5px;line-height:14px;transform:scaleX(1.035);transform-origin:50% 50%;color:#1a1a1a">Wojciech</span>
<span class="t" style="left:166.37px;top:298.6px;font-size:10.5px;line-height:14px;transform:scaleX(1.035);transform-origin:50% 50%;color:#1a1a1a">Krasoń</span>
<span class="t" style="left:266.13px;top:298.6px;font-size:10.5px;line-height:14px;transform:scaleX(1.035);transform-origin:50% 50%;color:#1a1a1a">M</span>
<span class="t" style="left:334.91px;top:298.6px;font-size:10.5px;line-height:14px;transform:scaleX(1.035);transform-origin:50% 50%;color:#1a1a1a">56</span>
<span class="t" style="left:376.99px;top:298.6px;font-size:10.5px;line-height:14px;transform:scaleX(1.035);transform-origin:50% 50%;color:#a02a3c">Kraków</span>
<span class="t" style="left:458.08px;top:298.6px;font-size:10.5px;line-height:14px;transform:scaleX(1.035);transform-origin:50% 50%;color:#1a1a1a">IT</span>
<span class="t" style="left:524.66px;top:298.6px;font-size:10.5px;line-height:14px;transform:scaleX(1.035);transform-origin:50% 50%;color:#1a1a1a">15</span>
<span class="t" style="left:583.13px;top:298.6px;font-size:10.5px;line-height:14px;transform:scaleX(1.035);transform-origin:100% 50%;color:#1a1a1a">6 500,00 zł</span>
<span class="t" style="left:45.83px;top:314.6px;font-size:10.5px;line-height:14px;transform:scaleX(1.035);transform-origin:50% 50%;color:#1a1a1a">8</span>
<span class="t" style="left:93.53px;top:314.6px;font-size:10.5px;line-height:14px;transform:scaleX(1.035);transform-origin:50% 50%;color:#1a1a1a">Aneta</span>
<span class="t" style="left:167.24px;top:314.6px;font-size:10.5px;line-height:14px;transform:scaleX(1.035);transform-origin:50% 50%;color:#1a1a1a">Babicz</span>
<span class="t" style="left:267px;top:314.6px;font-size:10.5px;line-height:14px;transform:scaleX(1.035);transform-origin:50% 50%;color:#1a1a1a">K</span>
<span class="t" style="left:334.91px;top:314.6px;font-size:10.5px;line-height:14px;transform:scaleX(1.035);transform-origin:50% 50%;color:#1a1a1a">34</span>
<span class="t" style="left:376.99px;top:314.6px;font-size:10.5px;line-height:14px;transform:scaleX(1.035);transform-origin:50% 50%;color:#a02a3c">Kraków</span>
<span class="t" style="left:425.69px;top:314.6px;font-size:10.5px;line-height:14px;transform:scaleX(1.035);transform-origin:50% 50%;color:#1a1a1a">Dział sprzedaży</span>
<span class="t" style="left:527.58px;top:314.6px;font-size:10.5px;line-height:14px;transform:scaleX(1.035);transform-origin:50% 50%;color:#1a1a1a">6</span>
<span class="t" style="left:583.13px;top:314.6px;font-size:10.5px;line-height:14px;transform:scaleX(1.035);transform-origin:100% 50%;color:#1a1a1a">4 500,00 zł</span>
<span class="t" style="left:45.83px;top:330.6px;font-size:10.5px;line-height:14px;transform:scaleX(1.035);transform-origin:50% 50%;color:#1a1a1a">9</span>
<span class="t" style="left:96.16px;top:330.6px;font-size:10.5px;line-height:14px;transform:scaleX(1.035);transform-origin:50% 50%;color:#1a1a1a">Olga</span>
<span class="t" style="left:154.12px;top:330.6px;font-size:10.5px;line-height:14px;transform:scaleX(1.035);transform-origin:50% 50%;color:#1a1a1a">Grzybowska</span>
<span class="t" style="left:267px;top:330.6px;font-size:10.5px;line-height:14px;transform:scaleX(1.035);transform-origin:50% 50%;color:#1a1a1a">K</span>
<span class="t" style="left:334.91px;top:330.6px;font-size:10.5px;line-height:14px;transform:scaleX(1.035);transform-origin:50% 50%;color:#1a1a1a">24</span>
<span class="t" style="left:376.99px;top:330.6px;font-size:10.5px;line-height:14px;transform:scaleX(1.035);transform-origin:50% 50%;color:#a02a3c">Kraków</span>
<span class="t" style="left:455.17px;top:330.6px;font-size:10.5px;line-height:14px;transform:scaleX(1.035);transform-origin:50% 50%;color:#1a1a1a">HR</span>
<span class="t" style="left:527.58px;top:330.6px;font-size:10.5px;line-height:14px;transform:scaleX(1.035);transform-origin:50% 50%;color:#1a1a1a">1</span>
<span class="t" style="left:583.13px;top:330.6px;font-size:10.5px;line-height:14px;transform:scaleX(1.035);transform-origin:100% 50%;color:#1a1a1a">3 200,00 zł</span>
<span class="t" style="left:42.91px;top:346.6px;font-size:10.5px;line-height:14px;transform:scaleX(1.035);transform-origin:50% 50%;color:#1a1a1a">10</span>
<span class="t" style="left:91.49px;top:346.6px;font-size:10.5px;line-height:14px;transform:scaleX(1.035);transform-origin:50% 50%;color:#1a1a1a">Teresa</span>
<span class="t" style="left:166.37px;top:346.6px;font-size:10.5px;line-height:14px;transform:scaleX(1.035);transform-origin:50% 50%;color:#1a1a1a">Krasoń</span>
<span class="t" style="left:267px;top:346.6px;font-size:10.5px;line-height:14px;transform:scaleX(1.035);transform-origin:50% 50%;color:#1a1a1a">K</span>
<span class="t" style="left:334.91px;top:346.6px;font-size:10.5px;line-height:14px;transform:scaleX(1.035);transform-origin:50% 50%;color:#1a1a1a">26</span>
<span class="t" style="left:370.19px;top:346.6px;font-size:10.5px;line-height:14px;transform:scaleX(1.035);transform-origin:50% 50%;color:#1a1a1a">Warszawa</span>
<span class="t" style="left:431.24px;top:346.6px;font-size:10.5px;line-height:14px;transform:scaleX(1.035);transform-origin:50% 50%;color:#1a1a1a">Administracja</span>
<span class="t" style="left:527.58px;top:346.6px;font-size:10.5px;line-height:14px;transform:scaleX(1.035);transform-origin:50% 50%;color:#1a1a1a">3</span>
<span class="t" style="left:583.13px;top:346.6px;font-size:10.5px;line-height:14px;transform:scaleX(1.035);transform-origin:100% 50%;color:#1a1a1a">7 600,00 zł</span>
<span class="t" style="left:43.3px;top:362.6px;font-size:10.5px;line-height:14px;transform:scaleX(1.035);transform-origin:50% 50%;color:#1a1a1a">11</span>
<span class="t" style="left:81.27px;top:362.6px;font-size:10.5px;line-height:14px;transform:scaleX(1.035);transform-origin:50% 50%;color:#1a1a1a">Magdalena</span>
<span class="t" style="left:167.82px;top:362.6px;font-size:10.5px;line-height:14px;transform:scaleX(1.035);transform-origin:50% 50%;color:#1a1a1a">Nocuń</span>
<span class="t" style="left:267px;top:362.6px;font-size:10.5px;line-height:14px;transform:scaleX(1.035);transform-origin:50% 50%;color:#1a1a1a">K</span>
<span class="t" style="left:334.91px;top:362.6px;font-size:10.5px;line-height:14px;transform:scaleX(1.035);transform-origin:50% 50%;color:#1a1a1a">29</span>
<span class="t" style="left:370.19px;top:362.6px;font-size:10.5px;line-height:14px;transform:scaleX(1.035);transform-origin:50% 50%;color:#1a1a1a">Warszawa</span>
<span class="t" style="left:431.24px;top:362.6px;font-size:10.5px;line-height:14px;transform:scaleX(1.035);transform-origin:50% 50%;color:#1a1a1a">Administracja</span>
<span class="t" style="left:527.58px;top:362.6px;font-size:10.5px;line-height:14px;transform:scaleX(1.035);transform-origin:50% 50%;color:#1a1a1a">3</span>
<span class="t" style="left:583.13px;top:362.6px;font-size:10.5px;line-height:14px;transform:scaleX(1.035);transform-origin:100% 50%;color:#1a1a1a">3 400,00 zł</span>
<span class="t" style="left:42.91px;top:378.6px;font-size:10.5px;line-height:14px;transform:scaleX(1.035);transform-origin:50% 50%;color:#1a1a1a">12</span>
<span class="t" style="left:90.32px;top:378.6px;font-size:10.5px;line-height:14px;transform:scaleX(1.035);transform-origin:50% 50%;color:#1a1a1a">Jolanta</span>
<span class="t" style="left:157.32px;top:378.6px;font-size:10.5px;line-height:14px;transform:scaleX(1.035);transform-origin:50% 50%;color:#1a1a1a">Krakowska</span>
<span class="t" style="left:267px;top:378.6px;font-size:10.5px;line-height:14px;transform:scaleX(1.035);transform-origin:50% 50%;color:#1a1a1a">K</span>
<span class="t" style="left:334.91px;top:378.6px;font-size:10.5px;line-height:14px;transform:scaleX(1.035);transform-origin:50% 50%;color:#1a1a1a">25</span>
<span class="t" style="left:376.41px;top:378.6px;font-size:10.5px;line-height:14px;transform:scaleX(1.035);transform-origin:50% 50%;color:#1a1a1a">Gdańsk</span>
<span class="t" style="left:439.7px;top:378.6px;font-size:10.5px;line-height:14px;transform:scaleX(1.035);transform-origin:50% 50%;color:#1a1a1a">Marketing</span>
<span class="t" style="left:527.58px;top:378.6px;font-size:10.5px;line-height:14px;transform:scaleX(1.035);transform-origin:50% 50%;color:#1a1a1a">1</span>
<span class="t" style="left:583.13px;top:378.6px;font-size:10.5px;line-height:14px;transform:scaleX(1.035);transform-origin:100% 50%;color:#1a1a1a">2 800,00 zł</span>
<span class="t" style="left:42.91px;top:394.6px;font-size:10.5px;line-height:14px;transform:scaleX(1.035);transform-origin:50% 50%;color:#1a1a1a">13</span>
<span class="t" style="left:91.49px;top:394.6px;font-size:10.5px;line-height:14px;transform:scaleX(1.035);transform-origin:50% 50%;color:#1a1a1a">Robert</span>
<span class="t" style="left:165.19px;top:394.6px;font-size:10.5px;line-height:14px;transform:scaleX(1.035);transform-origin:50% 50%;color:#1a1a1a">Stępień</span>
<span class="t" style="left:266.13px;top:394.6px;font-size:10.5px;line-height:14px;transform:scaleX(1.035);transform-origin:50% 50%;color:#1a1a1a">M</span>
<span class="t" style="left:334.91px;top:394.6px;font-size:10.5px;line-height:14px;transform:scaleX(1.035);transform-origin:50% 50%;color:#1a1a1a">45</span>
<span class="t" style="left:376.41px;top:394.6px;font-size:10.5px;line-height:14px;transform:scaleX(1.035);transform-origin:50% 50%;color:#1a1a1a">Gdańsk</span>
<span class="t" style="left:458.08px;top:394.6px;font-size:10.5px;line-height:14px;transform:scaleX(1.035);transform-origin:50% 50%;color:#1a1a1a">IT</span>
<span class="t" style="left:527.58px;top:394.6px;font-size:10.5px;line-height:14px;transform:scaleX(1.035);transform-origin:50% 50%;color:#1a1a1a">7</span>
<span class="t" style="left:583.13px;top:394.6px;font-size:10.5px;line-height:14px;transform:scaleX(1.035);transform-origin:100% 50%;color:#1a1a1a">4 700,00 zł</span>
<span class="t" style="left:42.91px;top:410.6px;font-size:10.5px;line-height:14px;transform:scaleX(1.035);transform-origin:50% 50%;color:#1a1a1a">14</span>
<span class="t" style="left:90.62px;top:410.6px;font-size:10.5px;line-height:14px;transform:scaleX(1.035);transform-origin:50% 50%;color:#1a1a1a">Cezary</span>
<span class="t" style="left:172.21px;top:410.6px;font-size:10.5px;line-height:14px;transform:scaleX(1.035);transform-origin:50% 50%;color:#1a1a1a">Kruk</span>
<span class="t" style="left:266.13px;top:410.6px;font-size:10.5px;line-height:14px;transform:scaleX(1.035);transform-origin:50% 50%;color:#1a1a1a">M</span>
<span class="t" style="left:334.91px;top:410.6px;font-size:10.5px;line-height:14px;transform:scaleX(1.035);transform-origin:50% 50%;color:#1a1a1a">33</span>
<span class="t" style="left:376.41px;top:410.6px;font-size:10.5px;line-height:14px;transform:scaleX(1.035);transform-origin:50% 50%;color:#1a1a1a">Gdańsk</span>
<span class="t" style="left:434.74px;top:410.6px;font-size:10.5px;line-height:14px;transform:scaleX(1.035);transform-origin:50% 50%;color:#1a1a1a">Księgowość</span>
<span class="t" style="left:527.58px;top:410.6px;font-size:10.5px;line-height:14px;transform:scaleX(1.035);transform-origin:50% 50%;color:#1a1a1a">3</span>
<span class="t" style="left:583.13px;top:410.6px;font-size:10.5px;line-height:14px;transform:scaleX(1.035);transform-origin:100% 50%;color:#1a1a1a">3 400,00 zł</span>
<span class="t" style="left:42.91px;top:426.6px;font-size:10.5px;line-height:14px;transform:scaleX(1.035);transform-origin:50% 50%;color:#1a1a1a">15</span>
<span class="t" style="left:96.16px;top:426.6px;font-size:10.5px;line-height:14px;transform:scaleX(1.035);transform-origin:50% 50%;color:#1a1a1a">Olga</span>
<span class="t" style="left:169.29px;top:426.6px;font-size:10.5px;line-height:14px;transform:scaleX(1.035);transform-origin:50% 50%;color:#1a1a1a">Kurek</span>
<span class="t" style="left:267px;top:426.6px;font-size:10.5px;line-height:14px;transform:scaleX(1.035);transform-origin:50% 50%;color:#1a1a1a">K</span>
<span class="t" style="left:334.91px;top:426.6px;font-size:10.5px;line-height:14px;transform:scaleX(1.035);transform-origin:50% 50%;color:#1a1a1a">27</span>
<span class="t" style="left:376.41px;top:426.6px;font-size:10.5px;line-height:14px;transform:scaleX(1.035);transform-origin:50% 50%;color:#1a1a1a">Gdańsk</span>
<span class="t" style="left:455.17px;top:426.6px;font-size:10.5px;line-height:14px;transform:scaleX(1.035);transform-origin:50% 50%;color:#1a1a1a">HR</span>
<span class="t" style="left:527.58px;top:426.6px;font-size:10.5px;line-height:14px;transform:scaleX(1.035);transform-origin:50% 50%;color:#1a1a1a">2</span>
<span class="t" style="left:583.13px;top:426.6px;font-size:10.5px;line-height:14px;transform:scaleX(1.035);transform-origin:100% 50%;color:#1a1a1a">3 200,00 zł</span>
<span class="t" style="left:42.91px;top:442.6px;font-size:10.5px;line-height:14px;transform:scaleX(1.035);transform-origin:50% 50%;color:#1a1a1a">16</span>
<span class="t" style="left:91.5px;top:442.6px;font-size:10.5px;line-height:14px;transform:scaleX(1.035);transform-origin:50% 50%;color:#1a1a1a">Marcin</span>
<span class="t" style="left:159.08px;top:442.6px;font-size:10.5px;line-height:14px;transform:scaleX(1.035);transform-origin:50% 50%;color:#1a1a1a">Jackowski</span>
<span class="t" style="left:266.13px;top:442.6px;font-size:10.5px;line-height:14px;transform:scaleX(1.035);transform-origin:50% 50%;color:#1a1a1a">M</span>
<span class="t" style="left:334.91px;top:442.6px;font-size:10.5px;line-height:14px;transform:scaleX(1.035);transform-origin:50% 50%;color:#1a1a1a">38</span>
<span class="t" style="left:376.99px;top:442.6px;font-size:10.5px;line-height:14px;transform:scaleX(1.035);transform-origin:50% 50%;color:#a02a3c">Kraków</span>
<span class="t" style="left:434.74px;top:442.6px;font-size:10.5px;line-height:14px;transform:scaleX(1.035);transform-origin:50% 50%;color:#1a1a1a">Księgowość</span>
<span class="t" style="left:527.58px;top:442.6px;font-size:10.5px;line-height:14px;transform:scaleX(1.035);transform-origin:50% 50%;color:#1a1a1a">7</span>
<span class="t" style="left:583.13px;top:442.6px;font-size:10.5px;line-height:14px;transform:scaleX(1.035);transform-origin:100% 50%;color:#1a1a1a">5 400,00 zł</span>
<span class="t" style="left:42.91px;top:458.6px;font-size:10.5px;line-height:14px;transform:scaleX(1.035);transform-origin:50% 50%;color:#1a1a1a">17</span>
<span class="t" style="left:93.83px;top:458.6px;font-size:10.5px;line-height:14px;transform:scaleX(1.035);transform-origin:50% 50%;color:#1a1a1a">Marta</span>
<span class="t" style="left:155.28px;top:458.6px;font-size:10.5px;line-height:14px;transform:scaleX(1.035);transform-origin:50% 50%;color:#1a1a1a">Dobrzyńska</span>
<span class="t" style="left:267px;top:458.6px;font-size:10.5px;line-height:14px;transform:scaleX(1.035);transform-origin:50% 50%;color:#1a1a1a">K</span>
<span class="t" style="left:334.91px;top:458.6px;font-size:10.5px;line-height:14px;transform:scaleX(1.035);transform-origin:50% 50%;color:#1a1a1a">48</span>
<span class="t" style="left:370.19px;top:458.6px;font-size:10.5px;line-height:14px;transform:scaleX(1.035);transform-origin:50% 50%;color:#1a1a1a">Warszawa</span>
<span class="t" style="left:455.17px;top:458.6px;font-size:10.5px;line-height:14px;transform:scaleX(1.035);transform-origin:50% 50%;color:#1a1a1a">HR</span>
<span class="t" style="left:525.05px;top:458.6px;font-size:10.5px;line-height:14px;transform:scaleX(1.035);transform-origin:50% 50%;color:#1a1a1a">11</span>
<span class="t" style="left:583.13px;top:458.6px;font-size:10.5px;line-height:14px;transform:scaleX(1.035);transform-origin:100% 50%;color:#1a1a1a">7 400,00 zł</span>
<span class="t" style="left:42.91px;top:474.6px;font-size:10.5px;line-height:14px;transform:scaleX(1.035);transform-origin:50% 50%;color:#1a1a1a">18</span>
<span class="t" style="left:86.24px;top:474.6px;font-size:10.5px;line-height:14px;transform:scaleX(1.035);transform-origin:50% 50%;color:#1a1a1a">Zbigniew</span>
<span class="t" style="left:162.28px;top:474.6px;font-size:10.5px;line-height:14px;transform:scaleX(1.035);transform-origin:50% 50%;color:#1a1a1a">Kowalski</span>
<span class="t" style="left:266.13px;top:474.6px;font-size:10.5px;line-height:14px;transform:scaleX(1.035);transform-origin:50% 50%;color:#1a1a1a">M</span>
<span class="t" style="left:334.91px;top:474.6px;font-size:10.5px;line-height:14px;transform:scaleX(1.035);transform-origin:50% 50%;color:#1a1a1a">24</span>
<span class="t" style="left:376.99px;top:474.6px;font-size:10.5px;line-height:14px;transform:scaleX(1.035);transform-origin:50% 50%;color:#a02a3c">Kraków</span>
<span class="t" style="left:431.24px;top:474.6px;font-size:10.5px;line-height:14px;transform:scaleX(1.035);transform-origin:50% 50%;color:#1a1a1a">Administracja</span>
<span class="t" style="left:527.58px;top:474.6px;font-size:10.5px;line-height:14px;transform:scaleX(1.035);transform-origin:50% 50%;color:#1a1a1a">1</span>
<span class="t" style="left:583.13px;top:474.6px;font-size:10.5px;line-height:14px;transform:scaleX(1.035);transform-origin:100% 50%;color:#1a1a1a">7 600,00 zł</span>
<span class="t" style="left:42.91px;top:490.6px;font-size:10.5px;line-height:14px;transform:scaleX(1.035);transform-origin:50% 50%;color:#1a1a1a">19</span>
<span class="t" style="left:94.99px;top:490.6px;font-size:10.5px;line-height:14px;transform:scaleX(1.035);transform-origin:50% 50%;color:#1a1a1a">Karol</span>
<span class="t" style="left:154.7px;top:490.6px;font-size:10.5px;line-height:14px;transform:scaleX(1.035);transform-origin:50% 50%;color:#1a1a1a">Łukasiewicz</span>
<span class="t" style="left:266.13px;top:490.6px;font-size:10.5px;line-height:14px;transform:scaleX(1.035);transform-origin:50% 50%;color:#1a1a1a">M</span>
<span class="t" style="left:334.91px;top:490.6px;font-size:10.5px;line-height:14px;transform:scaleX(1.035);transform-origin:50% 50%;color:#1a1a1a">56</span>
<span class="t" style="left:376.99px;top:490.6px;font-size:10.5px;line-height:14px;transform:scaleX(1.035);transform-origin:50% 50%;color:#a02a3c">Kraków</span>
<span class="t" style="left:434.74px;top:490.6px;font-size:10.5px;line-height:14px;transform:scaleX(1.035);transform-origin:50% 50%;color:#1a1a1a">Księgowość</span>
<span class="t" style="left:524.66px;top:490.6px;font-size:10.5px;line-height:14px;transform:scaleX(1.035);transform-origin:50% 50%;color:#1a1a1a">15</span>
<span class="t" style="left:577.29px;top:490.6px;font-size:10.5px;line-height:14px;transform:scaleX(1.035);transform-origin:100% 50%;color:#1a1a1a">12 000,00 zł</span>
<span class="t" style="left:42.91px;top:506.6px;font-size:10.5px;line-height:14px;transform:scaleX(1.035);transform-origin:50% 50%;color:#1a1a1a">20</span>
<span class="t" style="left:92.95px;top:506.6px;font-size:10.5px;line-height:14px;transform:scaleX(1.035);transform-origin:50% 50%;color:#1a1a1a">Paweł</span>
<span class="t" style="left:163.75px;top:506.6px;font-size:10.5px;line-height:14px;transform:scaleX(1.035);transform-origin:50% 50%;color:#1a1a1a">Wichura</span>
<span class="t" style="left:266.13px;top:506.6px;font-size:10.5px;line-height:14px;transform:scaleX(1.035);transform-origin:50% 50%;color:#1a1a1a">M</span>
<span class="t" style="left:334.91px;top:506.6px;font-size:10.5px;line-height:14px;transform:scaleX(1.035);transform-origin:50% 50%;color:#1a1a1a">43</span>
<span class="t" style="left:370.19px;top:506.6px;font-size:10.5px;line-height:14px;transform:scaleX(1.035);transform-origin:50% 50%;color:#1a1a1a">Warszawa</span>
<span class="t" style="left:458.08px;top:506.6px;font-size:10.5px;line-height:14px;transform:scaleX(1.035);transform-origin:50% 50%;color:#1a1a1a">IT</span>
<span class="t" style="left:524.66px;top:506.6px;font-size:10.5px;line-height:14px;transform:scaleX(1.035);transform-origin:50% 50%;color:#1a1a1a">12</span>
<span class="t" style="left:583.13px;top:506.6px;font-size:10.5px;line-height:14px;transform:scaleX(1.035);transform-origin:100% 50%;color:#1a1a1a">6 700,00 zł</span>
<span class="t" style="left:42.91px;top:522.6px;font-size:10.5px;line-height:14px;transform:scaleX(1.035);transform-origin:50% 50%;color:#1a1a1a">21</span>
<span class="t" style="left:95.87px;top:522.6px;font-size:10.5px;line-height:14px;transform:scaleX(1.035);transform-origin:50% 50%;color:#1a1a1a">Ilona</span>
<span class="t" style="left:166.66px;top:522.6px;font-size:10.5px;line-height:14px;transform:scaleX(1.035);transform-origin:50% 50%;color:#1a1a1a">Krakus</span>
<span class="t" style="left:267px;top:522.6px;font-size:10.5px;line-height:14px;transform:scaleX(1.035);transform-origin:50% 50%;color:#1a1a1a">K</span>
<span class="t" style="left:334.91px;top:522.6px;font-size:10.5px;line-height:14px;transform:scaleX(1.035);transform-origin:50% 50%;color:#1a1a1a">23</span>
<span class="t" style="left:376.41px;top:522.6px;font-size:10.5px;line-height:14px;transform:scaleX(1.035);transform-origin:50% 50%;color:#1a1a1a">Gdańsk</span>
<span class="t" style="left:455.17px;top:522.6px;font-size:10.5px;line-height:14px;transform:scaleX(1.035);transform-origin:50% 50%;color:#1a1a1a">HR</span>
<span class="t" style="left:527.58px;top:522.6px;font-size:10.5px;line-height:14px;transform:scaleX(1.035);transform-origin:50% 50%;color:#1a1a1a">1</span>
<span class="t" style="left:583.13px;top:522.6px;font-size:10.5px;line-height:14px;transform:scaleX(1.035);transform-origin:100% 50%;color:#1a1a1a">5 300,00 zł</span>
<span class="t" style="left:42.91px;top:538.6px;font-size:10.5px;line-height:14px;transform:scaleX(1.035);transform-origin:50% 50%;color:#1a1a1a">22</span>
<span class="t" style="left:83.03px;top:538.6px;font-size:10.5px;line-height:14px;transform:scaleX(1.035);transform-origin:50% 50%;color:#1a1a1a">Agnieszka</span>
<span class="t" style="left:154.41px;top:538.6px;font-size:10.5px;line-height:14px;transform:scaleX(1.035);transform-origin:50% 50%;color:#1a1a1a">Więckiewicz</span>
<span class="t" style="left:267px;top:538.6px;font-size:10.5px;line-height:14px;transform:scaleX(1.035);transform-origin:50% 50%;color:#1a1a1a">K</span>
<span class="t" style="left:334.91px;top:538.6px;font-size:10.5px;line-height:14px;transform:scaleX(1.035);transform-origin:50% 50%;color:#1a1a1a">26</span>
<span class="t" style="left:370.19px;top:538.6px;font-size:10.5px;line-height:14px;transform:scaleX(1.035);transform-origin:50% 50%;color:#1a1a1a">Warszawa</span>
<span class="t" style="left:431.24px;top:538.6px;font-size:10.5px;line-height:14px;transform:scaleX(1.035);transform-origin:50% 50%;color:#1a1a1a">Administracja</span>
<span class="t" style="left:527.58px;top:538.6px;font-size:10.5px;line-height:14px;transform:scaleX(1.035);transform-origin:50% 50%;color:#1a1a1a">2</span>
<span class="t" style="left:583.13px;top:538.6px;font-size:10.5px;line-height:14px;transform:scaleX(1.035);transform-origin:100% 50%;color:#1a1a1a">2 100,00 zł</span>
<span class="t" style="left:42.91px;top:554.6px;font-size:10.5px;line-height:14px;transform:scaleX(1.035);transform-origin:50% 50%;color:#1a1a1a">23</span>
<span class="t" style="left:85.17px;top:554.6px;font-size:10.5px;line-height:14px;transform:scaleX(1.035);transform-origin:50% 50%;color:#1a1a1a">Weronika</span>
<span class="t" style="left:170.74px;top:554.6px;font-size:10.5px;line-height:14px;transform:scaleX(1.035);transform-origin:50% 50%;color:#1a1a1a">Koral</span>
<span class="t" style="left:267px;top:554.6px;font-size:10.5px;line-height:14px;transform:scaleX(1.035);transform-origin:50% 50%;color:#1a1a1a">K</span>
<span class="t" style="left:334.91px;top:554.6px;font-size:10.5px;line-height:14px;transform:scaleX(1.035);transform-origin:50% 50%;color:#1a1a1a">27</span>
<span class="t" style="left:370.19px;top:554.6px;font-size:10.5px;line-height:14px;transform:scaleX(1.035);transform-origin:50% 50%;color:#1a1a1a">Warszawa</span>
<span class="t" style="left:431.24px;top:554.6px;font-size:10.5px;line-height:14px;transform:scaleX(1.035);transform-origin:50% 50%;color:#1a1a1a">Administracja</span>
<span class="t" style="left:527.58px;top:554.6px;font-size:10.5px;line-height:14px;transform:scaleX(1.035);transform-origin:50% 50%;color:#1a1a1a">3</span>
<span class="t" style="left:583.13px;top:554.6px;font-size:10.5px;line-height:14px;transform:scaleX(1.035);transform-origin:100% 50%;color:#1a1a1a">3 200,00 zł</span>
<span class="t" style="left:42.91px;top:570.6px;font-size:10.5px;line-height:14px;transform:scaleX(1.035);transform-origin:50% 50%;color:#1a1a1a">24</span>
<span class="t" style="left:93.24px;top:570.6px;font-size:10.5px;line-height:14px;transform:scaleX(1.035);transform-origin:50% 50%;color:#1a1a1a">Jakub</span>
<span class="t" style="left:163.26px;top:570.6px;font-size:10.5px;line-height:14px;transform:scaleX(1.035);transform-origin:50% 50%;color:#1a1a1a">Wojtasik</span>
<span class="t" style="left:266.13px;top:570.6px;font-size:10.5px;line-height:14px;transform:scaleX(1.035);transform-origin:50% 50%;color:#1a1a1a">M</span>
<span class="t" style="left:334.91px;top:570.6px;font-size:10.5px;line-height:14px;transform:scaleX(1.035);transform-origin:50% 50%;color:#1a1a1a">34</span>
<span class="t" style="left:370.19px;top:570.6px;font-size:10.5px;line-height:14px;transform:scaleX(1.035);transform-origin:50% 50%;color:#1a1a1a">Warszawa</span>
<span class="t" style="left:455.17px;top:570.6px;font-size:10.5px;line-height:14px;transform:scaleX(1.035);transform-origin:50% 50%;color:#1a1a1a">HR</span>
<span class="t" style="left:527.58px;top:570.6px;font-size:10.5px;line-height:14px;transform:scaleX(1.035);transform-origin:50% 50%;color:#1a1a1a">5</span>
<span class="t" style="left:583.13px;top:570.6px;font-size:10.5px;line-height:14px;transform:scaleX(1.035);transform-origin:100% 50%;color:#1a1a1a">3 400,00 zł</span>
<span class="t" style="left:42.91px;top:586.6px;font-size:10.5px;line-height:14px;transform:scaleX(1.035);transform-origin:50% 50%;color:#1a1a1a">25</span>
<span class="t" style="left:92.66px;top:586.6px;font-size:10.5px;line-height:14px;transform:scaleX(1.035);transform-origin:50% 50%;color:#1a1a1a">Marek</span>
<span class="t" style="left:160.53px;top:586.6px;font-size:10.5px;line-height:14px;transform:scaleX(1.035);transform-origin:50% 50%;color:#1a1a1a">Lubaszko</span>
<span class="t" style="left:266.13px;top:586.6px;font-size:10.5px;line-height:14px;transform:scaleX(1.035);transform-origin:50% 50%;color:#1a1a1a">M</span>
<span class="t" style="left:334.91px;top:586.6px;font-size:10.5px;line-height:14px;transform:scaleX(1.035);transform-origin:50% 50%;color:#1a1a1a">34</span>
<span class="t" style="left:376.41px;top:586.6px;font-size:10.5px;line-height:14px;transform:scaleX(1.035);transform-origin:50% 50%;color:#1a1a1a">Gdańsk</span>
<span class="t" style="left:434.74px;top:586.6px;font-size:10.5px;line-height:14px;transform:scaleX(1.035);transform-origin:50% 50%;color:#1a1a1a">Księgowość</span>
<span class="t" style="left:527.58px;top:586.6px;font-size:10.5px;line-height:14px;transform:scaleX(1.035);transform-origin:50% 50%;color:#1a1a1a">6</span>
<span class="t" style="left:583.13px;top:586.6px;font-size:10.5px;line-height:14px;transform:scaleX(1.035);transform-origin:100% 50%;color:#1a1a1a">5 000,00 zł</span>
<span class="t" style="left:42.91px;top:602.6px;font-size:10.5px;line-height:14px;transform:scaleX(1.035);transform-origin:50% 50%;color:#1a1a1a">26</span>
<span class="t" style="left:92.07px;top:602.6px;font-size:10.5px;line-height:14px;transform:scaleX(1.035);transform-origin:50% 50%;color:#1a1a1a">Kornel</span>
<span class="t" style="left:169.39px;top:602.6px;font-size:10.5px;line-height:14px;transform:scaleX(1.035);transform-origin:50% 50%;color:#1a1a1a">Woral</span>
<span class="t" style="left:266.13px;top:602.6px;font-size:10.5px;line-height:14px;transform:scaleX(1.035);transform-origin:50% 50%;color:#1a1a1a">M</span>
<span class="t" style="left:334.91px;top:602.6px;font-size:10.5px;line-height:14px;transform:scaleX(1.035);transform-origin:50% 50%;color:#1a1a1a">23</span>
<span class="t" style="left:370.19px;top:602.6px;font-size:10.5px;line-height:14px;transform:scaleX(1.035);transform-origin:50% 50%;color:#1a1a1a">Warszawa</span>
<span class="t" style="left:458.08px;top:602.6px;font-size:10.5px;line-height:14px;transform:scaleX(1.035);transform-origin:50% 50%;color:#1a1a1a">IT</span>
<span class="t" style="left:527.58px;top:602.6px;font-size:10.5px;line-height:14px;transform:scaleX(1.035);transform-origin:50% 50%;color:#1a1a1a">1</span>
<span class="t" style="left:583.13px;top:602.6px;font-size:10.5px;line-height:14px;transform:scaleX(1.035);transform-origin:100% 50%;color:#1a1a1a">6 200,00 zł</span>
<span class="t" style="left:42.91px;top:618.6px;font-size:10.5px;line-height:14px;transform:scaleX(1.035);transform-origin:50% 50%;color:#1a1a1a">27</span>
<span class="t" style="left:91.5px;top:618.6px;font-size:10.5px;line-height:14px;transform:scaleX(1.035);transform-origin:50% 50%;color:#1a1a1a">Marcin</span>
<span class="t" style="left:162.57px;top:618.6px;font-size:10.5px;line-height:14px;transform:scaleX(1.035);transform-origin:50% 50%;color:#1a1a1a">Paciorek</span>
<span class="t" style="left:266.13px;top:618.6px;font-size:10.5px;line-height:14px;transform:scaleX(1.035);transform-origin:50% 50%;color:#1a1a1a">M</span>
<span class="t" style="left:334.91px;top:618.6px;font-size:10.5px;line-height:14px;transform:scaleX(1.035);transform-origin:50% 50%;color:#1a1a1a">45</span>
<span class="t" style="left:376.99px;top:618.6px;font-size:10.5px;line-height:14px;transform:scaleX(1.035);transform-origin:50% 50%;color:#a02a3c">Kraków</span>
<span class="t" style="left:455.17px;top:618.6px;font-size:10.5px;line-height:14px;transform:scaleX(1.035);transform-origin:50% 50%;color:#1a1a1a">HR</span>
<span class="t" style="left:527.58px;top:618.6px;font-size:10.5px;line-height:14px;transform:scaleX(1.035);transform-origin:50% 50%;color:#1a1a1a">9</span>
<span class="t" style="left:583.13px;top:618.6px;font-size:10.5px;line-height:14px;transform:scaleX(1.035);transform-origin:100% 50%;color:#1a1a1a">2 600,00 zł</span>
<span class="t" style="left:42.91px;top:634.6px;font-size:10.5px;line-height:14px;transform:scaleX(1.035);transform-origin:50% 50%;color:#1a1a1a">28</span>
<span class="t" style="left:95.87px;top:634.6px;font-size:10.5px;line-height:14px;transform:scaleX(1.035);transform-origin:50% 50%;color:#1a1a1a">Artur</span>
<span class="t" style="left:153.54px;top:634.6px;font-size:10.5px;line-height:14px;transform:scaleX(1.035);transform-origin:50% 50%;color:#1a1a1a">Grzegorczyk</span>
<span class="t" style="left:266.13px;top:634.6px;font-size:10.5px;line-height:14px;transform:scaleX(1.035);transform-origin:50% 50%;color:#1a1a1a">M</span>
<span class="t" style="left:334.91px;top:634.6px;font-size:10.5px;line-height:14px;transform:scaleX(1.035);transform-origin:50% 50%;color:#1a1a1a">50</span>
<span class="t" style="left:376.99px;top:634.6px;font-size:10.5px;line-height:14px;transform:scaleX(1.035);transform-origin:50% 50%;color:#a02a3c">Kraków</span>
<span class="t" style="left:458.08px;top:634.6px;font-size:10.5px;line-height:14px;transform:scaleX(1.035);transform-origin:50% 50%;color:#1a1a1a">IT</span>
<span class="t" style="left:524.66px;top:634.6px;font-size:10.5px;line-height:14px;transform:scaleX(1.035);transform-origin:50% 50%;color:#1a1a1a">15</span>
<span class="t" style="left:583.13px;top:634.6px;font-size:10.5px;line-height:14px;transform:scaleX(1.035);transform-origin:100% 50%;color:#1a1a1a">3 400,00 zł</span>
<div class="b" style="left:1263.7px;top:169.5px;width:16.3px;height:480.5px;background:#e8e8e8"></div>
<div class="b" style="left:1265px;top:172.5px;width:14px;height:362px;background:#fff;border:1px solid #cfcfcf;box-sizing:border-box"></div>
<div class="b" style="left:1265px;top:183px;width:14px;height:1px;background:#cfcfcf"></div>
<svg class="b" style="left:1268px;top:175px" width="8" height="6" viewBox="0 0 8 6"><path d="M.5 5 L4 1 L7.5 5z" fill="#555"/></svg>
<svg class="b" style="left:1268px;top:641px" width="8" height="6" viewBox="0 0 8 6"><path d="M.5 1 L4 5 L7.5 1z" fill="#555"/></svg>
<div class="b" style="left:1265px;top:637px;width:14px;height:12px;background:#fff;border:1px solid #cfcfcf;box-sizing:border-box;z-index:0"></div>
<svg class="b" style="left:1268px;top:640.5px" width="8" height="6" viewBox="0 0 8 6"><path d="M.5 1 L4 5 L7.5 1z" fill="#555"/></svg>
<!-- p_bottom -->
<div class="b" style="left:0px;top:649.5px;width:1280px;height:18.5px;background:#ebebeb"></div>
<div class="b" style="left:0px;top:649.5px;width:1280px;height:1px;background:#c6c6c6"></div>
<svg class="b" style="left:17px;top:654px" width="6" height="8" viewBox="0 0 6 8"><path d="M5 .8 L1 4 L5 7.2z" fill="#c2c2c2"/></svg>
<svg class="b" style="left:36px;top:654px" width="6" height="8" viewBox="0 0 6 8"><path d="M1 .8 L5 4 L1 7.2z" fill="#c2c2c2"/></svg>
<div class="b" style="left:68.5px;top:652px;width:1px;height:12px;background:#c2c2c2"></div>
<div class="b" style="left:127.5px;top:652px;width:1px;height:12px;background:#c2c2c2"></div>
<span class="t" style="left:78px;top:649.6px;font-size:10.5px;line-height:14px;transform:scaleX(1.028);transform-origin:0 50%;color:#555">Arkusz1</span>
<span class="t" style="left:137px;top:649.6px;font-size:10.5px;line-height:14px;transform:scaleX(1.015);transform-origin:0 50%;color:#555">Arkusz2</span>
<div class="b" style="left:186.4px;top:649.5px;width:58.2px;height:15.5px;background:#fff"></div>
<div class="b" style="left:186.4px;top:664.4px;width:58.2px;height:1.3px;background:#2f6a4b"></div>
<div class="b" style="left:186.4px;top:650px;width:1px;height:14.5px;background:#d0d0d0"></div>
<div class="b" style="left:243.6px;top:650px;width:1px;height:14.5px;background:#d0d0d0"></div>
<span class="t" style="left:194.2px;top:649.6px;font-size:10.5px;line-height:14px;transform:scaleX(1.028);transform-origin:0 50%;font-weight:bold;color:#1e6b41">Arkusz3</span>
<svg class="b" style="left:266px;top:651.5px" width="14" height="14" viewBox="0 0 14 14"><circle cx="7" cy="7" r="6" fill="none" stroke="#7a7a7a" stroke-width="1"/><path d="M7 3.8 V10.2 M3.8 7 H10.2" stroke="#7a7a7a" stroke-width="1"/></svg>
<div class="b" style="left:765.8px;top:653.5px;width:1.8px;height:1.8px;background:#8f8f8f"></div>
<div class="b" style="left:765.8px;top:657px;width:1.8px;height:1.8px;background:#8f8f8f"></div>
<div class="b" style="left:765.8px;top:660.5px;width:1.8px;height:1.8px;background:#8f8f8f"></div>
<div class="b" style="left:779px;top:652.2px;width:484px;height:12.6px;background:#f0f0f0"></div>
<div class="b" style="left:779px;top:652.2px;width:11.5px;height:12.6px;background:#fff;border:1px solid #cfcfcf;box-sizing:border-box"></div>
<svg class="b" style="left:781.5px;top:654.5px" width="6" height="8" viewBox="0 0 6 8"><path d="M5 .8 L1 4 L5 7.2z" fill="#555"/></svg>
<div class="b" style="left:791px;top:652.2px;width:437px;height:12.6px;background:#fff;border:1px solid #cfcfcf;box-sizing:border-box"></div>
<div class="b" style="left:1251.5px;top:652.2px;width:11.5px;height:12.6px;background:#fff;border:1px solid #cfcfcf;box-sizing:border-box"></div>
<svg class="b" style="left:1254.5px;top:654.5px" width="6" height="8" viewBox="0 0 6 8"><path d="M1 .8 L5 4 L1 7.2z" fill="#555"/></svg>
<div class="b" style="left:0px;top:668px;width:1280px;height:18.5px;background:#f3f2f1"></div>
<span class="t" style="left:6.8px;top:671.5px;font-size:9px;line-height:12px;transform:scaleX(0.970);transform-origin:0 50%;color:#444">Gotowy</span>
<span class="t" style="left:63.7px;top:671.5px;font-size:9px;line-height:12px;transform:scaleX(0.954);transform-origin:0 50%;color:#444">Scroll Lock</span>
<span class="t" style="left:977.5px;top:671.5px;font-size:9px;line-height:12px;transform:scaleX(0.905);transform-origin:0 50%;color:#444">Licznik: 35</span>
<div class="b" style="left:1032.5px;top:667.5px;width:32.5px;height:19px;background:#c8c6c4"></div>
<svg class="b" style="left:1043px;top:671.5px" width="12" height="12" viewBox="0 0 12 12"><rect x=".6" y=".6" width="10.3" height="10.3" fill="none" stroke="#444" stroke-width="1"/><path d="M4 .6 V11 M7.5 .6 V11 M.6 4 H11 M.6 7.5 H11" stroke="#444" stroke-width="1"/></svg>
<svg class="b" style="left:1076px;top:671.5px" width="12" height="12" viewBox="0 0 12 12"><rect x=".6" y=".6" width="10.3" height="10.3" fill="none" stroke="#444" stroke-width="1"/><rect x="3" y="3" width="5.5" height="5.5" fill="none" stroke="#444" stroke-width=".9"/><path d="M4.2 5 h3 M4.2 6.8 h3" stroke="#444" stroke-width=".7"/></svg>
<svg class="b" style="left:1109px;top:671.5px" width="12" height="12" viewBox="0 0 12 12"><rect x=".6" y=".6" width="10.3" height="10.3" fill="none" stroke="#444" stroke-width="1"/><path d="M4 .6 V6 H11 M.6 6 H4" fill="none" stroke="#444" stroke-width="1"/></svg>
<div class="b" style="left:1137px;top:677px;width:6px;height:1px;background:#8a8886"></div>
<div class="b" style="left:1147.5px;top:677px;width:82.5px;height:1px;background:#a19f9d"></div>
<div class="b" style="left:1187.3px;top:672px;width:3px;height:11px;background:#605e5c"></div>
<div class="b" style="left:1234.5px;top:677px;width:6.5px;height:1px;background:#8a8886"></div>
<div class="b" style="left:1237.3px;top:674.2px;width:1px;height:6.5px;background:#8a8886"></div>
<span class="t" style="left:1252.5px;top:671.5px;font-size:9px;line-height:12px;transform:scaleX(0.891);transform-origin:0 50%;color:#555">100%</span>
<div class="b" style="left:0px;top:686.5px;width:1280px;height:33.5px;background:linear-gradient(90deg,#22343f 0%,#24363f 30%,#202e3d 55%,#1c2942 80%,#1b2541 100%)"></div>
<svg class="b" style="left:13.5px;top:696.5px" width="14" height="14" viewBox="0 0 14 14"><path d="M0 2 L5.7 1.2 V6.5 H0z M6.6 1.1 L13.5 .1 V6.5 H6.6z M0 7.4 H5.7 V12.7 L0 11.9z M6.6 7.4 H13.5 V13.8 L6.6 12.8z" fill="#fff"/></svg>
<div class="b" style="left:40px;top:687px;width:285.5px;height:33px;background:#f2f2f2"></div>
<svg class="b" style="left:50px;top:696.6px" width="14" height="14" viewBox="0 0 14 14"><circle cx="8.2" cy="5.6" r="4.3" fill="none" stroke="#222" stroke-width="1.2"/><path d="M5.2 8.8 L1 13" stroke="#222" stroke-width="1.3"/></svg>
<span class="t" style="left:73px;top:696.2px;font-size:12px;line-height:16px;transform:scaleX(1.042);transform-origin:0 50%;color:#2b2b2b">Wpisz tu wyszukiwane słowa</span>
<!-- p_taskbar -->
<div class="b" style="left:740.5px;top:686.5px;width:40px;height:33.5px;background:#4a5563"></div>
<div class="b" style="left:414px;top:718.3px;width:34px;height:1.7px;background:#76b9ed"></div>
<div class="b" style="left:537px;top:718.3px;width:34.5px;height:1.7px;background:#76b9ed"></div>
<div class="b" style="left:580px;top:718.3px;width:33px;height:1.7px;background:#76b9ed"></div>
<div class="b" style="left:662px;top:718.3px;width:33px;height:1.7px;background:#76b9ed"></div>
<div class="b" style="left:704px;top:718.3px;width:33px;height:1.7px;background:#76b9ed"></div>
<div class="b" style="left:740.5px;top:718.3px;width:40px;height:1.7px;background:#76b9ed"></div>
<div class="b" style="left:786px;top:718.3px;width:33px;height:1.7px;background:#76b9ed"></div>
<div class="b" style="left:826px;top:718.3px;width:34px;height:1.7px;background:#76b9ed"></div>
<svg class="b" style="left:339px;top:696.9px" width="15" height="14" viewBox="0 0 15 14"><rect x="1.5" y="4.5" width="8.5" height="5.5" fill="none" stroke="#fff" stroke-width="1.1"/><path d="M1.5 1 V4 M10 1 V4 M1.5 10.5 V13.5 M10 10.5 V13.5" stroke="#fff" stroke-width="1.1"/><path d="M13.3 1 V13.5" stroke="#fff" stroke-width="1.1"/><rect x="12.4" y="5.6" width="1.9" height="1.9" fill="#fff"/></svg>
<svg class="b" style="left:379px;top:692.9px" width="20" height="20" viewBox="0 0 20 20"><path d="M2.2 9 C3 3.8 7 1.2 11 1.6 C15.5 2 18 5.5 17.8 10.6 H7.5 C7.6 13.2 9.6 14.6 12.3 14.6 C14.2 14.6 15.8 14.1 17 13.3 V17 C15.5 17.9 13.6 18.4 11.6 18.4 C6.6 18.4 3.6 15.4 3.6 11.2 C3.6 8.6 4.9 6.5 7 5.3 C4.8 5.8 3.2 7.2 2.2 9z M7.6 8 H13.4 C13.3 6 12.2 5 10.6 5 C9 5 7.9 6.1 7.6 8z" fill="#2b86d9"/></svg>
<svg class="b" style="left:419.5px;top:693.4px" width="22" height="19" viewBox="0 0 22 19"><path d="M1 2.5 H8 L9.5 4 H20.5 V16.5 H1z" fill="#e9b73c"/><path d="M1 6 H20.5 V17 H1z" fill="#f8d775"/><path d="M6 10.5 H15.5 V17 H6z" fill="#5a9bd4"/><path d="M8.2 13 H13.3 V17 H8.2z" fill="#f8d775"/></svg>
<svg class="b" style="left:462px;top:691.9px" width="19" height="21" viewBox="0 0 19 21"><path d="M6.2 6 V4.5 a3.3 3.3 0 0 1 6.6 0 V6" fill="none" stroke="#fff" stroke-width="1.2"/><path d="M1 6 H18 V20 H1z" fill="#fff"/><rect x="5.6" y="9" width="3.5" height="3.5" fill="#f25022"/><rect x="9.9" y="9" width="3.5" height="3.5" fill="#7fba00"/><rect x="5.6" y="13.3" width="3.5" height="3.5" fill="#00a4ef"/><rect x="9.9" y="13.3" width="3.5" height="3.5" fill="#ffb900"/></svg>
<svg class="b" style="left:501.5px;top:692.4px" width="27" height="25" viewBox="0 0 27 25"><path d="M1 7.5 L10.5 1 L20 7.5 V18 H1z" fill="#2d8ad6"/><path d="M1 7.5 L10.5 13.5 L20 7.5 V18 H1z" fill="#58aef0"/><path d="M1 18 L10.5 11.5 L20 18z" fill="#3b9be6"/><circle cx="20.3" cy="18" r="5.6" fill="#1b2a3d" stroke="#fff" stroke-width="1"/><text x="20.3" y="21.4" font-size="9.5" font-weight="bold" font-family="Liberation Sans, sans-serif" fill="#fff" text-anchor="middle">1</text></svg>
<svg class="b" style="left:545px;top:692.9px" width="20" height="20" viewBox="0 0 20 20"><circle cx="10" cy="10" r="9.5" fill="#fff"/><path d="M10 .5 A9.5 9.5 0 0 1 18.23 5.25 L10 5.25 A4.75 4.75 0 0 0 5.89 7.62 L1.77 5.25 A9.5 9.5 0 0 1 10 .5z" fill="#db4437"/><path d="M18.23 5.25 A9.5 9.5 0 0 1 10 19.5 L14.11 12.38 A4.75 4.75 0 0 0 14.11 7.62 L14.5 5.25z" fill="#ffcd40"/><path d="M10 19.5 A9.5 9.5 0 0 1 1.77 5.25 L5.89 12.38 A4.75 4.75 0 0 0 10 14.75 L12.5 15z" fill="#0f9d58"/><circle cx="10" cy="10" r="4.4" fill="#fff"/><circle cx="10" cy="10" r="3.5" fill="#4285f4"/></svg>
<svg class="b" style="left:584.5px;top:692.9px" width="21" height="20" viewBox="0 0 21 20"><rect x="5" y="1" width="15" height="18" rx="1.2" fill="#41a5ee"/><rect x="5" y="5.5" width="15" height="4.5" fill="#2b7cd3"/><rect x="5" y="10" width="15" height="4.5" fill="#185abd"/><rect x="5" y="14.5" width="15" height="4.5" fill="#103f91"/><rect x=".5" y="4.5" width="11" height="11" rx="1" fill="#185abd"/><text x="6" y="13.4" font-size="8.5" font-weight="bold" font-family="Liberation Sans, sans-serif" fill="#fff" text-anchor="middle">W</text></svg>
<svg class="b" style="left:629px;top:694.4px" width="17" height="17" viewBox="0 0 17 17"><path d="M.5 .5 H16.5 V16.5 H.5z" fill="#f8e21c"/><path d="M16.5 8.5 V16.5 H8.5z" fill="#2b2b1a"/></svg>
<svg class="b" style="left:667px;top:692.9px" width="21" height="20" viewBox="0 0 21 20"><rect x="6" y="1" width="14.5" height="18" rx="1.2" fill="#1490df"/><rect x="6" y="1" width="7.2" height="6" fill="#0364b8"/><rect x="13.2" y="1" width="7.3" height="6" fill="#28a8ea"/><rect x="6" y="7" width="7.2" height="6" fill="#0f78d4"/><rect x="13.2" y="7" width="7.3" height="6" fill="#50d9ff"/><path d="M6 13 H20.5 V19 H6z" fill="#0a5aa8"/><rect x=".5" y="4.5" width="11" height="11" rx="1" fill="#0f6cbd"/><text x="6" y="13.4" font-size="8.5" font-weight="bold" font-family="Liberation Sans, sans-serif" fill="#fff" text-anchor="middle">O</text></svg>
<svg class="b" style="left:708.5px;top:691.4px" width="23" height="22" viewBox="0 0 23 22"><path d="M9.5 5 C4.5 5 1 8.3 1 12.5 C1 16.8 4.8 19.5 8.5 19.5 C10.5 19.5 10.3 17.8 11.6 17.2 C13.3 16.4 17.5 17.5 17.5 12 C17.5 8 14 5 9.5 5z" fill="#e8e4dc" stroke="#b9b3a6" stroke-width=".7"/><circle cx="5" cy="10.5" r="1.5" fill="#e74c3c"/><circle cx="8.5" cy="8" r="1.5" fill="#f5c518"/><circle cx="12.5" cy="9" r="1.5" fill="#3aa757"/><circle cx="5.2" cy="14.8" r="1.5" fill="#3b82f6"/><path d="M20.5 1 L22 2.2 L13.5 14.5 L11.5 13.2z" fill="#d9a066"/><path d="M11.5 13.2 L13.5 14.5 L11 17 L10 16.2z" fill="#7a4a1e"/></svg>
<svg class="b" style="left:749.5px;top:692.9px" width="21" height="20" viewBox="0 0 21 20"><rect x="5" y="1" width="15" height="18" rx="1.2" fill="#21a366"/><rect x="5" y="1" width="7.5" height="4.5" fill="#21a366"/><rect x="12.5" y="1" width="7.5" height="4.5" fill="#33c481"/><rect x="5" y="5.5" width="7.5" height="4.5" fill="#107c41"/><rect x="12.5" y="5.5" width="7.5" height="4.5" fill="#21a366"/><rect x="5" y="10" width="7.5" height="4.5" fill="#185c37"/><rect x="12.5" y="10" width="7.5" height="4.5" fill="#107c41"/><rect x="5" y="14.5" width="15" height="4.5" fill="#185c37"/><rect x=".5" y="4.5" width="11" height="11" rx="1" fill="#107c41"/><text x="6" y="13.2" font-size="8.5" font-weight="bold" font-family="Liberation Sans, sans-serif" fill="#fff" text-anchor="middle">X</text></svg>
<svg class="b" style="left:792.5px;top:692.9px" width="20" height="20" viewBox="0 0 20 20"><circle cx="10" cy="10" r="9" fill="#23212a" stroke="#e8e8e8" stroke-width="1.3"/><g fill="none" stroke="#e8e8e8" stroke-width="1.5" stroke-linecap="round"><path d="M10.2 10 C8.2 8.6 7.6 6.2 8.8 4"/><path d="M10.2 10 C12.4 9 14.8 9.8 16 12"/><path d="M10.2 10 C10 12.4 8.2 14.2 5.6 14.2"/></g><g fill="#e8e8e8"><path d="M8.8 4 C10.8 3.4 13 4.6 13.4 7 C12.4 5.6 10.6 5.2 9.6 6.4z"/><path d="M16 12 C15.6 14.2 13.4 15.6 11.2 14.8 C13 14.6 14.2 13.2 13.6 11.6z"/><path d="M5.6 14.2 C4 12.6 4 10 5.8 8.6 C5.2 10.2 5.8 12 7.4 12.4z"/></g></svg>
<svg class="b" style="left:832px;top:692.4px" width="24" height="22" viewBox="0 0 24 22"><path d="M2 4.6 L21.5 1 L22.2 4.4 L2.6 8z" fill="#4aa8f5"/><path d="M2 7.4 H22.2 V20.4 H2z" fill="#1e7fd6"/><path d="M2 7.4 H22.2 V10 H2z" fill="#2f93e8"/><path d="M9 10.6 L16.6 14.4 L9 18.2z" fill="#fff"/></svg>
<svg class="b" style="left:1083.5px;top:700px" width="11" height="7" viewBox="0 0 11 7"><path d="M1 6 L5.5 1.5 L10 6" fill="none" stroke="#fff" stroke-width="1.2"/></svg>
<svg class="b" style="left:1101.5px;top:697.5px" width="15" height="11" viewBox="0 0 15 11"><rect x="4.5" y="2.5" width="9.5" height="6.5" fill="none" stroke="#fff" stroke-width="1.1"/><path d="M1 1 V10 M1 3.5 H4.5 M1 7.5 H3" stroke="#fff" stroke-width="1"/></svg>
<svg class="b" style="left:1123px;top:695px" width="11" height="16" viewBox="0 0 11 16"><rect x="3" y=".8" width="5" height="9.5" rx="2.5" fill="#fff"/><path d="M1 8 a4.5 4.5 0 0 0 9 0 M5.5 12.5 V15 M3 15 H8" fill="none" stroke="#fff" stroke-width="1"/></svg>
<svg class="b" style="left:1141px;top:696.5px" width="16" height="13" viewBox="0 0 16 13"><path d="M1 4.5 H3.5 L6.5 1.5 V11.5 L3.5 8.5 H1z" fill="none" stroke="#fff" stroke-width="1"/><path d="M8.5 4.5 a3 3 0 0 1 0 4 M10.5 2.8 a5.5 5.5 0 0 1 0 7.4 M12.5 1.2 a8 8 0 0 1 0 10.6" fill="none" stroke="#fff" stroke-width="1"/></svg>
<svg class="b" style="left:1162.5px;top:696.5px" width="14" height="13" viewBox="0 0 14 13"><path d="M1.5 12 a10.5 10.5 0 0 1 10.5 -10.5 M4.5 12 a7.5 7.5 0 0 1 7.5 -7.5 M7.5 12 a4.5 4.5 0 0 1 4.5 -4.5" fill="none" stroke="#fff" stroke-width="1" opacity=".8"/><circle cx="11" cy="11" r="1.4" fill="#fff"/></svg>
<span class="t" style="left:1195.5px;top:689.3px;font-size:10px;line-height:13px;transform:scaleX(0.927);transform-origin:0 50%;color:#fff">23:40</span>
<span class="t" style="left:1183.7px;top:704.7px;font-size:10px;line-height:13px;transform:scaleX(0.935);transform-origin:0 50%;color:#fff">21.06.2020</span>
<svg class="b" style="left:1245px;top:694.5px" width="22" height="22" viewBox="0 0 22 22"><path d="M1.5 1 H13 V9.5 H5.5 L3 12 V9.5 H1.5z" fill="#fff"/><path d="M3.5 3.5 H11 M3.5 5.3 H11 M3.5 7.1 H11" stroke="#1b2a3d" stroke-width=".7"/><circle cx="14" cy="15.5" r="5.6" fill="#1b2a3d" stroke="#fff" stroke-width="1"/><text x="14" y="18.9" font-size="9.5" font-weight="bold" font-family="Liberation Sans, sans-serif" fill="#fff" text-anchor="middle">3</text></svg>
<!-- p_menus -->
<div class="b" style="left:628.5px;top:117.5px;width:200.5px;height:276px;background:#fff;border:1px solid #cfcdcb;box-sizing:border-box;box-shadow:1px 1px 3px rgba(0,0,0,.13)"></div>
<svg class="b" style="left:642.3px;top:129px" width="26" height="23" viewBox="0 0 26 23"><rect x=".5" y=".5" width="22.5" height="17" fill="#fff"/><rect x="6.6" y="1" width="10.5" height="5.2" fill="#f8d9a0"/><rect x="6.6" y="6.2" width="10.5" height="5.7" fill="#f3bf6a"/><rect x=".5" y=".5" width="22.5" height="17" fill="none" stroke="#605e5c" stroke-width="1.1"/><path d="M6.58 .5 V17.5 M16.93 .5 V17.5 M.5 6.17 H23 M.5 11.83 H23" stroke="#605e5c" stroke-width=".95"/><rect x="10" y="11.3" width="14.5" height="11" fill="#fff" stroke="#605e5c" stroke-width="1"/><text x="17.25" y="20.5" font-size="10.5" font-family="Liberation Sans, sans-serif" fill="#444" text-anchor="middle">≤</text></svg>
<span class="t" style="left:673.8px;top:134.7px;font-size:9.3px;line-height:12px;transform:scaleX(1.053);transform-origin:0 50%;font-weight:bold;color:#1f1f1f">Reguły wyróżniania <u>k</u>omórek</span>
<svg class="b" style="left:814.7px;top:133.5px" width="7" height="10" viewBox="0 0 7 10"><path d="M1.2 1 L5.3 5 L1.2 9" fill="none" stroke="#555" stroke-width=".95"/></svg>
<svg class="b" style="left:642.3px;top:168.3px" width="26" height="23" viewBox="0 0 26 23"><rect x=".5" y=".5" width="22.5" height="17.6" fill="#fff"/><rect x="6.58" y=".5" width="10.35" height="17.6" fill="#f8d9a0"/><rect x=".5" y=".5" width="22.5" height="17.6" fill="none" stroke="#605e5c" stroke-width="1.1"/><path d="M6.58 .5 V18.1 M16.93 .5 V18.1 M.5 6.37 H23 M.5 12.23 H23" stroke="#605e5c" stroke-width=".95"/><rect x="7.08" y="1" width="9.35" height="10" fill="#f8d9a0"/><path d="M11.75 11 V2 M8.55 5.6 l3.2 -3.4 l3.2 3.4" fill="none" stroke="#333" stroke-width="1.1"/><rect x="10" y="11.3" width="14.5" height="11" fill="#fff" stroke="#605e5c" stroke-width="1"/><text x="17.25" y="19.7" font-size="9" font-family="Liberation Sans, sans-serif" fill="#444" text-anchor="middle">10</text></svg>
<span class="t" style="left:673.8px;top:173.6px;font-size:9.3px;line-height:12px;transform:scaleX(1.050);transform-origin:0 50%;font-weight:bold;color:#1f1f1f">Reguły pierwszych/os<u>t</u>atnich</span>
<svg class="b" style="left:814.7px;top:172.5px" width="7" height="10" viewBox="0 0 7 10"><path d="M1.2 1 L5.3 5 L1.2 9" fill="none" stroke="#555" stroke-width=".95"/></svg>
<div class="b" style="left:666px;top:198.3px;width:162px;height:1px;background:#e1dfdd"></div>
<svg class="b" style="left:642.3px;top:209.3px" width="24" height="19" viewBox="0 0 24 19"><rect x=".5" y=".5" width="22.5" height="17.5" fill="#fff"/><rect x="1" y="1" width="3.6" height="16" fill="#cfe3f7"/><rect x="4.6" y="1" width="7.4" height="5.2" fill="#5ea4e6"/><rect x="4.6" y="6.2" width="4" height="5.6" fill="#5ea4e6"/><rect x="4.6" y="11.8" width="5.6" height="5.4" fill="#5ea4e6"/><rect x=".5" y=".5" width="22.5" height="17.5" fill="none" stroke="#605e5c" stroke-width="1.1"/><path d="M4.5 .5 V18 M19.4 .5 V18 M.5 6.33 H23 M.5 12.17 H23" stroke="#605e5c" stroke-width=".95"/></svg>
<span class="t" style="left:673.8px;top:215px;font-size:9.3px;line-height:12px;transform:scaleX(1.009);transform-origin:0 50%;font-weight:bold;color:#1f1f1f"><u>P</u>aski danych</span>
<svg class="b" style="left:814.7px;top:213.5px" width="7" height="10" viewBox="0 0 7 10"><path d="M1.2 1 L5.3 5 L1.2 9" fill="none" stroke="#555" stroke-width=".95"/></svg>
<svg class="b" style="left:642.3px;top:249px" width="24" height="19" viewBox="0 0 24 19"><rect x=".5" y=".5" width="22.5" height="17.5" fill="#fff"/><rect x="4.6" y="1" width="15" height="5.6" fill="#6aa9e6"/><rect x="4.6" y="6.6" width="15" height="5.4" fill="#f8cf85"/><rect x="4.6" y="12" width="15" height="5.4" fill="#f47e7e"/><rect x=".5" y=".5" width="22.5" height="17.5" fill="none" stroke="#605e5c" stroke-width="1.1"/><path d="M4.5 .5 V18 M19.6 .5 V18" stroke="#605e5c" stroke-width=".9"/><path d="M.5 6.5 H4.5 M.5 12 H4.5 M19.6 6.5 H23 M19.6 12 H23" stroke="#605e5c" stroke-width=".8"/></svg>
<span class="t" style="left:673.8px;top:254.5px;font-size:9.3px;line-height:12px;transform:scaleX(1.023);transform-origin:0 50%;font-weight:bold;color:#1f1f1f"><u>S</u>kale kolorów</span>
<svg class="b" style="left:814.7px;top:253px" width="7" height="10" viewBox="0 0 7 10"><path d="M1.2 1 L5.3 5 L1.2 9" fill="none" stroke="#555" stroke-width=".95"/></svg>
<svg class="b" style="left:642.3px;top:288.3px" width="24" height="19" viewBox="0 0 24 19"><rect x=".5" y=".5" width="22.5" height="17.5" fill="#fff"/><rect x=".5" y=".5" width="22.5" height="17.5" fill="none" stroke="#605e5c" stroke-width="1.1"/><path d="M4.5 .5 V18 M19.4 .5 V18 M.5 6.33 H23 M.5 12.17 H23" stroke="#605e5c" stroke-width=".95"/><circle cx="7.6" cy="3.6" r="1.1" fill="#2f7f9f"/><circle cx="7.6" cy="9.3" r="1.1" fill="#d9534f"/><circle cx="7.6" cy="15" r="1.1" fill="#2f7f9f"/><path d="M12.5 3.6 h5 M12.5 9.3 h5 M12.5 15 h5" stroke="#9a9a9a" stroke-width="1"/></svg>
<span class="t" style="left:673.8px;top:294px;font-size:9.3px;line-height:12px;transform:scaleX(1.036);transform-origin:0 50%;font-weight:bold;color:#1f1f1f">Zestawy <u>i</u>kon</span>
<svg class="b" style="left:814.7px;top:292px" width="7" height="10" viewBox="0 0 7 10"><path d="M1.2 1 L5.3 5 L1.2 9" fill="none" stroke="#555" stroke-width=".95"/></svg>
<div class="b" style="left:629.5px;top:318px;width:198.5px;height:1px;background:#e1dfdd"></div>
<svg class="b" style="left:638.6px;top:325px" width="14" height="12" viewBox="0 0 14 12"><rect x=".5" y=".5" width="12.5" height="11" fill="#fbe3b5" stroke="#7a5a3a" stroke-width=".9"/><path d="M4.6 .5 V11.5 M8.8 .5 V11.5 M.5 4.2 H13 M.5 7.8 H13" stroke="#8a6a4a" stroke-width=".8"/></svg>
<span class="t" style="left:659.5px;top:325.8px;font-size:9.3px;line-height:12px;transform:scaleX(1.042);transform-origin:0 50%;color:#333"><u>N</u>owa reguła...</span>
<svg class="b" style="left:638.6px;top:348.5px" width="14" height="13" viewBox="0 0 14 13"><rect x=".5" y=".5" width="12.5" height="11" fill="#fff" stroke="#7a5a3a" stroke-width=".9"/><path d="M4.6 .5 V11.5 M8.8 .5 V6 M.5 4.2 H13 M.5 7.8 H6" stroke="#8a6a4a" stroke-width=".8"/><rect x="1" y="1" width="3.6" height="3.2" fill="#f8cf85"/><path d="M5.5 9.5 L10 5 L13 7.8 L8.5 12.3z" fill="#d48fdb" stroke="#a030a8" stroke-width=".8"/></svg>
<span class="t" style="left:659.5px;top:349.5px;font-size:9.3px;line-height:12px;transform:scaleX(1.031);transform-origin:0 50%;color:#333"><u>W</u>yczyść reguły</span>
<svg class="b" style="left:814.7px;top:349.5px" width="7" height="10" viewBox="0 0 7 10"><path d="M1.2 1 L5.3 5 L1.2 9" fill="none" stroke="#555" stroke-width=".95"/></svg>
<svg class="b" style="left:638.6px;top:372.5px" width="14" height="13" viewBox="0 0 14 13"><rect x=".5" y="1.5" width="12.5" height="11" fill="#fff" stroke="#605e5c" stroke-width=".9"/><rect x="1" y="2" width="11.5" height="2.4" fill="#8a8886"/><rect x="4.6" y="5" width="4.2" height="7" fill="#f3bf6a"/><rect x="8.8" y="5" width="4" height="3.6" fill="#f8d9a0"/><path d="M4.6 1.5 V12.5 M8.8 1.5 V12.5 M.5 5 H13 M.5 8.6 H13" stroke="#8a6a4a" stroke-width=".8"/></svg>
<span class="t" style="left:659.5px;top:374px;font-size:9.3px;line-height:12px;transform:scaleX(1.048);transform-origin:0 50%;color:#333">Zarządzaj <u>r</u>egułami...</span>
<div class="b" style="left:828.5px;top:158px;width:194.5px;height:264.8px;background:#fff;border:1px solid #cfcdcb;box-sizing:border-box;box-shadow:1px 1px 3px rgba(0,0,0,.13)"></div>
<svg class="b" style="left:842.3px;top:169.3px" width="26" height="23" viewBox="0 0 26 23"><rect x=".5" y=".5" width="22.5" height="17.6" fill="#fff"/><rect x="6.58" y=".5" width="10.35" height="17.6" fill="#f8d9a0"/><rect x=".5" y=".5" width="22.5" height="17.6" fill="none" stroke="#605e5c" stroke-width="1.1"/><path d="M6.58 .5 V18.1 M16.93 .5 V18.1 M.5 6.37 H23 M.5 12.23 H23" stroke="#605e5c" stroke-width=".95"/><rect x="7.08" y="1" width="9.35" height="10" fill="#f8d9a0"/><path d="M11.75 11 V2 M8.55 5.6 l3.2 -3.4 l3.2 3.4" fill="none" stroke="#333" stroke-width="1.1"/><rect x="10" y="11.3" width="14.5" height="11" fill="#fff" stroke="#605e5c" stroke-width="1"/><text x="17.25" y="19.7" font-size="9" font-family="Liberation Sans, sans-serif" fill="#444" text-anchor="middle">10</text></svg>
<span class="t" style="left:874px;top:175.8px;font-size:9.3px;line-height:12px;transform:scaleX(1.049);transform-origin:0 50%;font-weight:bold;color:#1f1f1f">10 pierwszyc<u>h</u> elementów...</span>
<svg class="b" style="left:842.3px;top:208.3px" width="26" height="23" viewBox="0 0 26 23"><rect x=".5" y=".5" width="22.5" height="17.6" fill="#fff"/><rect x="6.58" y=".5" width="10.35" height="17.6" fill="#f8d9a0"/><rect x=".5" y=".5" width="22.5" height="17.6" fill="none" stroke="#605e5c" stroke-width="1.1"/><path d="M6.58 .5 V18.1 M16.93 .5 V18.1 M.5 6.37 H23 M.5 12.23 H23" stroke="#605e5c" stroke-width=".95"/><rect x="7.08" y="1" width="9.35" height="10" fill="#f8d9a0"/><path d="M11.75 11 V2 M8.55 5.6 l3.2 -3.4 l3.2 3.4" fill="none" stroke="#333" stroke-width="1.1"/><rect x="10" y="11.3" width="14.5" height="11" fill="#fff" stroke="#605e5c" stroke-width="1"/><text x="17.25" y="19.7" font-size="9" font-family="Liberation Sans, sans-serif" fill="#444" text-anchor="middle">%</text></svg>
<span class="t" style="left:874px;top:214.8px;font-size:9.3px;line-height:12px;transform:scaleX(1.033);transform-origin:0 50%;font-weight:bold;color:#1f1f1f"><u>P</u>ierwsze 10%...</span>
<svg class="b" style="left:842.3px;top:247.5px" width="26" height="23" viewBox="0 0 26 23"><rect x=".5" y=".5" width="22.5" height="17.6" fill="#fff"/><rect x="6.58" y=".5" width="10.35" height="17.6" fill="#f8d9a0"/><rect x=".5" y=".5" width="22.5" height="17.6" fill="none" stroke="#605e5c" stroke-width="1.1"/><path d="M6.58 .5 V18.1 M16.93 .5 V18.1 M.5 6.37 H23 M.5 12.23 H23" stroke="#605e5c" stroke-width=".95"/><rect x="7.08" y="1" width="9.35" height="10" fill="#f8d9a0"/><path d="M11.75 2 V11 M8.55 7.4 l3.2 3.4 l3.2 -3.4" fill="none" stroke="#333" stroke-width="1.1"/><rect x="10" y="11.3" width="14.5" height="11" fill="#fff" stroke="#605e5c" stroke-width="1"/><text x="17.25" y="19.7" font-size="9" font-family="Liberation Sans, sans-serif" fill="#444" text-anchor="middle">10</text></svg>
<span class="t" style="left:874px;top:254px;font-size:9.3px;line-height:12px;transform:scaleX(1.064);transform-origin:0 50%;font-weight:bold;color:#1f1f1f">10 <u>o</u>statnich elementów...</span>
<svg class="b" style="left:842.3px;top:286.8px" width="26" height="23" viewBox="0 0 26 23"><rect x=".5" y=".5" width="22.5" height="17.6" fill="#fff"/><rect x="6.58" y=".5" width="10.35" height="17.6" fill="#f8d9a0"/><rect x=".5" y=".5" width="22.5" height="17.6" fill="none" stroke="#605e5c" stroke-width="1.1"/><path d="M6.58 .5 V18.1 M16.93 .5 V18.1 M.5 6.37 H23 M.5 12.23 H23" stroke="#605e5c" stroke-width=".95"/><rect x="7.08" y="1" width="9.35" height="10" fill="#f8d9a0"/><path d="M11.75 2 V11 M8.55 7.4 l3.2 3.4 l3.2 -3.4" fill="none" stroke="#333" stroke-width="1.1"/><rect x="10" y="11.3" width="14.5" height="11" fill="#fff" stroke="#605e5c" stroke-width="1"/><text x="17.25" y="19.7" font-size="9" font-family="Liberation Sans, sans-serif" fill="#444" text-anchor="middle">%</text></svg>
<span class="t" style="left:874px;top:293.3px;font-size:9.3px;line-height:12px;transform:scaleX(1.073);transform-origin:0 50%;font-weight:bold;color:#1f1f1f">O<u>s</u>tatnie 10%...</span>
<svg class="b" style="left:842.3px;top:326.2px" width="26" height="23" viewBox="0 0 26 23"><rect x=".5" y=".5" width="22.5" height="17.6" fill="#fff"/><rect x="6.58" y=".5" width="10.35" height="17.6" fill="#f8d9a0"/><rect x=".5" y=".5" width="22.5" height="17.6" fill="none" stroke="#605e5c" stroke-width="1.1"/><path d="M6.58 .5 V18.1 M16.93 .5 V18.1 M.5 6.37 H23 M.5 12.23 H23" stroke="#605e5c" stroke-width=".95"/><rect x="7.08" y="1" width="9.35" height="10" fill="#f8d9a0"/><path d="M11.75 11 V2 M8.55 5.6 l3.2 -3.4 l3.2 3.4" fill="none" stroke="#333" stroke-width="1.1"/><rect x="10" y="11.3" width="14.5" height="11" fill="#fff" stroke="#605e5c" stroke-width="1"/><text x="17.25" y="19.7" font-size="10" font-family="Liberation Serif, serif" fill="#444" text-anchor="middle" font-style="italic">x̄</text></svg>
<span class="t" style="left:874px;top:332.7px;font-size:9.3px;line-height:12px;transform:scaleX(1.022);transform-origin:0 50%;font-weight:bold;color:#1f1f1f">Powy<u>ż</u>ej średniej...</span>
<svg class="b" style="left:842.3px;top:365.5px" width="26" height="23" viewBox="0 0 26 23"><rect x=".5" y=".5" width="22.5" height="17.6" fill="#fff"/><rect x="6.58" y=".5" width="10.35" height="17.6" fill="#f8d9a0"/><rect x=".5" y=".5" width="22.5" height="17.6" fill="none" stroke="#605e5c" stroke-width="1.1"/><path d="M6.58 .5 V18.1 M16.93 .5 V18.1 M.5 6.37 H23 M.5 12.23 H23" stroke="#605e5c" stroke-width=".95"/><rect x="7.08" y="1" width="9.35" height="10" fill="#f8d9a0"/><path d="M11.75 2 V11 M8.55 7.4 l3.2 3.4 l3.2 -3.4" fill="none" stroke="#333" stroke-width="1.1"/><rect x="10" y="11.3" width="14.5" height="11" fill="#fff" stroke="#605e5c" stroke-width="1"/><text x="17.25" y="19.7" font-size="10" font-family="Liberation Serif, serif" fill="#444" text-anchor="middle" font-style="italic">x̄</text></svg>
<span class="t" style="left:874px;top:372px;font-size:9.3px;line-height:12px;transform:scaleX(1.018);transform-origin:0 50%;font-weight:bold;color:#1f1f1f">Po<u>n</u>iżej średniej...</span>
<div class="b" style="left:829.5px;top:396.3px;width:192.5px;height:1px;background:#e1dfdd"></div>
<span class="t" style="left:859.5px;top:403.7px;font-size:9.3px;line-height:12px;transform:scaleX(1.035);transform-origin:0 50%;color:#333"><u>W</u>ięcej reguł...</span>
<svg class="b" style="left:794px;top:126px" width="11" height="17" viewBox="0 0 11 17"><path d="M1 1 V13.2 L4 10.5 L6.2 15.5 L8 14.7 L5.8 9.8 H9.8z" fill="#fff" stroke="#777" stroke-width=".7"/></svg>
</body></html>
